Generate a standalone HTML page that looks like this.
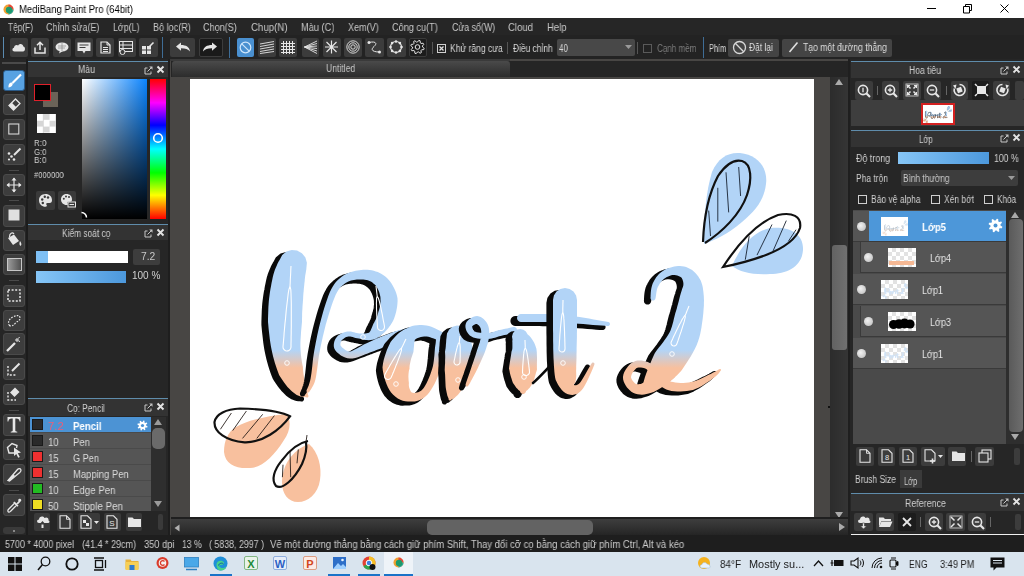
<!DOCTYPE html>
<html><head><meta charset="utf-8"><style>
html,body{margin:0;padding:0;width:1024px;height:576px;overflow:hidden;background:#262626;position:relative}
.t{position:absolute;white-space:pre;font-family:"Liberation Sans",sans-serif;line-height:1;will-change:transform}
svg{overflow:visible}
</style></head><body>
<div style="position:absolute;left:0px;top:0px;width:1024px;height:18px;background:#ffffff"></div><svg style="position:absolute;left:3px;top:4px" width="11" height="11" viewBox="0 0 11 11">
<circle cx="5.5" cy="5.5" r="5" fill="#f0a030"/><path d="M5.5 0.5 A5 5 0 0 1 10.5 5.5 L5.5 5.5Z" fill="#e8453c"/>
<path d="M10.5 5.5 A5 5 0 0 1 5.5 10.5 L5.5 5.5Z" fill="#2aa8a0"/><circle cx="6" cy="6" r="3.2" fill="#1e9a6a"/></svg><div style="position:absolute;left:927px;top:8px;width:9px;height:1px;background:#000"></div><svg style="position:absolute;left:962px;top:3px" width="11" height="11"><path d="M1.5 3.5h6v6.5h-6z M3.5 3.5v-2h6v6h-2" fill="none" stroke="#000" stroke-width="1"/></svg><svg style="position:absolute;left:999.5px;top:3.7px" width="9" height="9"><path d="M0.5 0.5L8.5 8.5M8.5 0.5L0.5 8.5" stroke="#000" stroke-width="1"/></svg><div style="position:absolute;left:0px;top:18px;width:1024px;height:17px;background:#262626"></div><div style="position:absolute;left:0px;top:35px;width:1024px;height:24px;background:#232323"></div><div style="position:absolute;left:2.5px;top:37px;width:1px;height:21px;background:#5a8ab0"></div><div style="position:absolute;left:9.7px;top:38px;width:18.1px;height:18.5px;background:#3c3c3c;border-radius:2px;"></div><div style="position:absolute;left:31.3px;top:38px;width:17.900000000000002px;height:18.5px;background:#3c3c3c;border-radius:2px;"></div><div style="position:absolute;left:53.3px;top:38px;width:17.900000000000006px;height:18.5px;background:#3c3c3c;border-radius:2px;"></div><div style="position:absolute;left:74.7px;top:38px;width:18.5px;height:18.5px;background:#3c3c3c;border-radius:2px;"></div><div style="position:absolute;left:96.1px;top:38px;width:18.200000000000003px;height:18.5px;background:#3c3c3c;border-radius:2px;"></div><div style="position:absolute;left:118px;top:38px;width:18.19999999999999px;height:18.5px;background:#3c3c3c;border-radius:2px;"></div><div style="position:absolute;left:139.2px;top:38px;width:19.0px;height:18.5px;background:#3c3c3c;border-radius:2px;"></div><div style="position:absolute;left:162px;top:37px;width:1px;height:21px;background:#3f6d96"></div><div style="position:absolute;left:170px;top:38px;width:24.80000000000001px;height:18.5px;background:#3c3c3c;border-radius:2px;"></div><div style="position:absolute;left:198.6px;top:38px;width:24.099999999999994px;height:18.5px;background:#1a1a1a;border-radius:2px;border:1px solid #3c3c3c;box-sizing:border-box"></div><div style="position:absolute;left:229px;top:37px;width:1px;height:21px;background:#3f6d96"></div><div style="position:absolute;left:236.7px;top:38px;width:17.600000000000023px;height:18.5px;background:#4a90d0;border-radius:2px;"></div><div style="position:absolute;left:257.8px;top:38px;width:18.19999999999999px;height:18.5px;background:#3c3c3c;border-radius:2px;"></div><div style="position:absolute;left:279px;top:38px;width:18.399999999999977px;height:18.5px;background:#3c3c3c;border-radius:2px;"></div><div style="position:absolute;left:301.5px;top:38px;width:17.5px;height:18.5px;background:#3c3c3c;border-radius:2px;"></div><div style="position:absolute;left:322.9px;top:38px;width:18.100000000000023px;height:18.5px;background:#3c3c3c;border-radius:2px;"></div><div style="position:absolute;left:344px;top:38px;width:18px;height:18.5px;background:#3c3c3c;border-radius:2px;"></div><div style="position:absolute;left:365px;top:38px;width:18.5px;height:18.5px;background:#3c3c3c;border-radius:2px;"></div><div style="position:absolute;left:387px;top:38px;width:18.5px;height:18.5px;background:#3c3c3c;border-radius:2px;"></div><div style="position:absolute;left:409px;top:38px;width:17.600000000000023px;height:18.5px;background:#1c1c1c;border-radius:2px;border:1px solid #3a3a3a;box-sizing:border-box"></div><div style="position:absolute;left:432px;top:42px;width:1px;height:12px;background:#555"></div><div style="position:absolute;left:437px;top:44px;width:9px;height:9px;border:1px solid #d0d0d0;box-sizing:border-box"></div><svg style="position:absolute;left:437px;top:44px" width="9" height="9"><path d="M2.5 2.5L6.5 6.5M6.5 2.5L2.5 6.5" stroke="#e0e0e0" stroke-width="1.3"/></svg><div style="position:absolute;left:507px;top:42px;width:1px;height:12px;background:#555"></div><div style="position:absolute;left:557px;top:38.5px;width:78px;height:17px;background:#484848;border-radius:2px"></div><svg style="position:absolute;left:625px;top:45px" width="7" height="4"><path d="M0 0h7L3.5 4z" fill="#9a9a9a"/></svg><div style="position:absolute;left:637px;top:42px;width:1px;height:12px;background:#555"></div><div style="position:absolute;left:643px;top:44px;width:8.5px;height:9px;border:1px solid #5a5a5a;box-sizing:border-box"></div><div style="position:absolute;left:703px;top:37px;width:1px;height:21px;background:#3f6d96"></div><div style="position:absolute;left:728.4px;top:38.6px;width:50.60000000000002px;height:18.299999999999997px;background:#444444;border-radius:2px;"></div><svg style="position:absolute;left:732px;top:40px" width="15" height="15"><circle cx="7.5" cy="7.5" r="6" fill="none" stroke="#d8d8d8" stroke-width="1.3"/><path d="M3.3 3.3L11.7 11.7" stroke="#d8d8d8" stroke-width="1.3"/></svg><div style="position:absolute;left:782.2px;top:38.6px;width:109.69999999999993px;height:18.299999999999997px;background:#444444;border-radius:2px;"></div><svg style="position:absolute;left:788px;top:41px" width="11" height="12"><path d="M1.5 11L9.5 1.5" stroke="#e0e0e0" stroke-width="1.6"/></svg><div style="position:absolute;left:0px;top:59px;width:28px;height:477px;background:#262626"></div><div style="position:absolute;left:3px;top:70px;width:22px;height:21px;background:#58a2e2;border-radius:3px;border:1px solid #2a5a88;box-sizing:border-box"></div><div style="position:absolute;left:3px;top:94px;width:22px;height:21.400000000000006px;background:#3d3d3d;border-radius:3px;border:1px solid #4a4a4a;box-sizing:border-box"></div><div style="position:absolute;left:3px;top:119px;width:22px;height:21px;background:#3d3d3d;border-radius:3px;border:1px solid #4a4a4a;box-sizing:border-box"></div><div style="position:absolute;left:3px;top:144px;width:22px;height:21px;background:#3d3d3d;border-radius:3px;border:1px solid #4a4a4a;box-sizing:border-box"></div><div style="position:absolute;left:3px;top:174px;width:22px;height:22px;background:#3d3d3d;border-radius:3px;border:1px solid #4a4a4a;box-sizing:border-box"></div><div style="position:absolute;left:3px;top:205px;width:22px;height:21.80000000000001px;background:#3d3d3d;border-radius:3px;border:1px solid #4a4a4a;box-sizing:border-box"></div><div style="position:absolute;left:3px;top:229.7px;width:22px;height:21.30000000000001px;background:#3d3d3d;border-radius:3px;border:1px solid #4a4a4a;box-sizing:border-box"></div><div style="position:absolute;left:3px;top:254px;width:22px;height:21.399999999999977px;background:#3d3d3d;border-radius:3px;border:1px solid #4a4a4a;box-sizing:border-box"></div><div style="position:absolute;left:3px;top:284.7px;width:22px;height:21.900000000000034px;background:#3d3d3d;border-radius:3px;border:1px solid #4a4a4a;box-sizing:border-box"></div><div style="position:absolute;left:3px;top:309.5px;width:22px;height:21.899999999999977px;background:#3d3d3d;border-radius:3px;border:1px solid #4a4a4a;box-sizing:border-box"></div><div style="position:absolute;left:3px;top:333px;width:22px;height:21.80000000000001px;background:#3d3d3d;border-radius:3px;border:1px solid #4a4a4a;box-sizing:border-box"></div><div style="position:absolute;left:3px;top:358.4px;width:22px;height:21.600000000000023px;background:#3d3d3d;border-radius:3px;border:1px solid #4a4a4a;box-sizing:border-box"></div><div style="position:absolute;left:3px;top:384px;width:22px;height:20.69999999999999px;background:#3d3d3d;border-radius:3px;border:1px solid #4a4a4a;box-sizing:border-box"></div><div style="position:absolute;left:3px;top:413.8px;width:22px;height:21.899999999999977px;background:#3d3d3d;border-radius:3px;border:1px solid #4a4a4a;box-sizing:border-box"></div><div style="position:absolute;left:3px;top:438.6px;width:22px;height:21.899999999999977px;background:#3d3d3d;border-radius:3px;border:1px solid #4a4a4a;box-sizing:border-box"></div><div style="position:absolute;left:3px;top:464px;width:22px;height:21px;background:#3d3d3d;border-radius:3px;border:1px solid #4a4a4a;box-sizing:border-box"></div><div style="position:absolute;left:3px;top:494px;width:22px;height:22px;background:#3d3d3d;border-radius:3px;border:1px solid #4a4a4a;box-sizing:border-box"></div><div style="position:absolute;left:9px;top:170px;width:10px;height:1px;background:#4a4a4a"></div><div style="position:absolute;left:9px;top:200px;width:10px;height:1px;background:#4a4a4a"></div><div style="position:absolute;left:9px;top:279.8px;width:10px;height:1px;background:#4a4a4a"></div><div style="position:absolute;left:9px;top:409.5px;width:10px;height:1px;background:#4a4a4a"></div><div style="position:absolute;left:9px;top:489.7px;width:10px;height:1px;background:#4a4a4a"></div><div style="position:absolute;left:3px;top:527px;width:22px;height:7px;background:#3a3a3a;border-radius:3px"></div><div style="position:absolute;left:2px;top:62px;width:24px;height:1.5px;background:#4a4a4a"></div><div style="position:absolute;left:26px;top:59px;width:1.5px;height:477px;background:#1c1c1c"></div><div style="position:absolute;left:28px;top:59px;width:142px;height:477px;background:#262626"></div><div style="position:absolute;left:168px;top:59px;width:3px;height:477px;background:#1e1e1e"></div><div style="position:absolute;left:28px;top:61px;width:140px;height:1px;background:#5f8cab"></div><div style="position:absolute;left:28px;top:62px;width:140px;height:15px;background:#333333"></div><svg style="position:absolute;left:143px;top:64.5px" width="22" height="10"><path d="M4.5 3H2V9H8V6.5" fill="none" stroke="#c8c8c8" stroke-width="1"/><path d="M4.5 6.5L8 3" stroke="#c8c8c8" stroke-width="1"/><path d="M6.2 1.5H9.5V4.8Z" fill="#c8c8c8"/><path d="M14.5 1.5L20.5 7.5M20.5 1.5L14.5 7.5" stroke="#e4e4e4" stroke-width="1.9"/></svg><div style="position:absolute;left:42.6px;top:91.6px;width:15px;height:15px;background:#6b6358"></div><div style="position:absolute;left:33.7px;top:83.5px;width:17.7px;height:17.5px;background:#000;border:1.5px solid #e0202a;box-sizing:border-box"></div><div style="position:absolute;left:37px;top:114px;width:19px;height:19px;background:#fff;background-image:linear-gradient(45deg,transparent 0),conic-gradient(#d6d6d6 25%,#fff 0 50%,#d6d6d6 0 75%,#fff 0);background-size:12.6px 12.6px;background-position:0 0"></div><div style="position:absolute;left:36px;top:191px;width:18.7px;height:18.7px;background:#3a3a3a;border-radius:2px"></div><div style="position:absolute;left:58px;top:191px;width:18px;height:18.7px;background:#3a3a3a;border-radius:2px"></div><div style="position:absolute;left:82px;top:79px;width:65px;height:140px;background:linear-gradient(to bottom,rgba(0,0,0,0),#000),linear-gradient(to right,#fff,#0a84ff)"></div><div style="position:absolute;left:150px;top:79px;width:16px;height:140px;background:linear-gradient(to bottom,#ff0000 0%,#ff00ff 17%,#0000ff 33%,#00ffff 50%,#00ff00 67%,#ffff00 83%,#ff0000 100%)"></div><svg style="position:absolute;left:152px;top:132px" width="12" height="12"><circle cx="6" cy="6" r="4.3" fill="none" stroke="#fff" stroke-width="1.6"/></svg><svg style="position:absolute;left:80px;top:211px" width="9" height="9"><path d="M1.5 1.5A5 5 0 0 1 6.5 6.5" fill="none" stroke="#fff" stroke-width="1.5"/></svg><div style="position:absolute;left:28px;top:224px;width:140px;height:1px;background:#5f8cab"></div><div style="position:absolute;left:28px;top:225px;width:140px;height:15px;background:#333333"></div><svg style="position:absolute;left:143px;top:227.5px" width="22" height="10"><path d="M4.5 3H2V9H8V6.5" fill="none" stroke="#c8c8c8" stroke-width="1"/><path d="M4.5 6.5L8 3" stroke="#c8c8c8" stroke-width="1"/><path d="M6.2 1.5H9.5V4.8Z" fill="#c8c8c8"/><path d="M14.5 1.5L20.5 7.5M20.5 1.5L14.5 7.5" stroke="#e4e4e4" stroke-width="1.9"/></svg><div style="position:absolute;left:35.5px;top:250.8px;width:92px;height:12px;background:#ffffff"></div><div style="position:absolute;left:35.5px;top:250.8px;width:12.2px;height:12px;background:#7ec0f5"></div><div style="position:absolute;left:133.4px;top:248.6px;width:26.6px;height:16px;background:#3d3d3d;border-radius:2px"></div><div style="position:absolute;left:35.5px;top:270.5px;width:90.5px;height:12.5px;background:linear-gradient(to right,#86c6f7,#4c98dc)"></div><div style="position:absolute;left:28px;top:398px;width:140px;height:1px;background:#5f8cab"></div><div style="position:absolute;left:28px;top:399px;width:140px;height:17px;background:#333333"></div><svg style="position:absolute;left:143px;top:401.5px" width="22" height="10"><path d="M4.5 3H2V9H8V6.5" fill="none" stroke="#c8c8c8" stroke-width="1"/><path d="M4.5 6.5L8 3" stroke="#c8c8c8" stroke-width="1"/><path d="M6.2 1.5H9.5V4.8Z" fill="#c8c8c8"/><path d="M14.5 1.5L20.5 7.5M20.5 1.5L14.5 7.5" stroke="#e4e4e4" stroke-width="1.9"/></svg><div style="position:absolute;left:30px;top:417px;width:121px;height:94px;overflow:hidden;background:#4a4a4a"><div style="position:absolute;left:0;top:0px;width:121px;height:15px;background:#4c93d4"></div><div style="position:absolute;left:2px;top:2px;width:11px;height:11px;background:#2a2a2a;border:1px solid #1a1a1a;box-sizing:border-box"></div><div style="position:absolute;left:0;top:16px;width:121px;height:15px;background:#555555"></div><div style="position:absolute;left:2px;top:18px;width:11px;height:11px;background:#2a2a2a;border:1px solid #1a1a1a;box-sizing:border-box"></div><div style="position:absolute;left:0;top:32px;width:121px;height:15px;background:#555555"></div><div style="position:absolute;left:2px;top:34px;width:11px;height:11px;background:#ee3030;border:1px solid #1a1a1a;box-sizing:border-box"></div><div style="position:absolute;left:0;top:48px;width:121px;height:15px;background:#555555"></div><div style="position:absolute;left:2px;top:50px;width:11px;height:11px;background:#ee3030;border:1px solid #1a1a1a;box-sizing:border-box"></div><div style="position:absolute;left:0;top:64px;width:121px;height:15px;background:#555555"></div><div style="position:absolute;left:2px;top:66px;width:11px;height:11px;background:#22bb22;border:1px solid #1a1a1a;box-sizing:border-box"></div><div style="position:absolute;left:0;top:80px;width:121px;height:15px;background:#555555"></div><div style="position:absolute;left:2px;top:82px;width:11px;height:11px;background:#eedd22;border:1px solid #1a1a1a;box-sizing:border-box"></div></div><div style="position:absolute;left:151px;top:417px;width:15px;height:94px;background:#2e2e2e"></div><svg style="position:absolute;left:153px;top:418px" width="10" height="90"><path d="M5 1L9 7H1z" fill="#9a9a9a"/><path d="M5 89L9 83H1z" fill="#9a9a9a"/></svg><div style="position:absolute;left:152px;top:428px;width:13px;height:21px;background:#6a6a6a;border-radius:5px"></div><div style="position:absolute;left:34px;top:513px;width:16px;height:18px;background:#3a3a3a;border-radius:2px"></div><div style="position:absolute;left:57px;top:513px;width:16px;height:18px;background:#3a3a3a;border-radius:2px"></div><div style="position:absolute;left:78px;top:513px;width:22px;height:18px;background:#3a3a3a;border-radius:2px"></div><div style="position:absolute;left:104px;top:513px;width:17px;height:18px;background:#3a3a3a;border-radius:2px"></div><div style="position:absolute;left:126px;top:513px;width:16px;height:18px;background:#3a3a3a;border-radius:2px"></div><div style="position:absolute;left:158px;top:514px;width:5px;height:16px;background:#3a3a3a;border-radius:2px"></div><div style="position:absolute;left:170px;top:59px;width:680px;height:477px;background:#484644"></div><div style="position:absolute;left:170px;top:59px;width:340px;height:2px;background:#3a3a3a"></div><div style="position:absolute;left:171px;top:61px;width:679px;height:16px;background:#252525"></div><div style="position:absolute;left:171.5px;top:61px;width:338px;height:15.5px;background:linear-gradient(#4a4a4a,#2c2c2c);border-radius:3px 3px 0 0"></div><div style="position:absolute;left:190px;top:79px;width:624px;height:438px;background:#ffffff"></div><div style="position:absolute;left:830px;top:77px;width:18px;height:442px;background:linear-gradient(to right,#2c2c2c,#353535)"></div><div style="position:absolute;left:832px;top:245px;width:14.5px;height:105px;background:linear-gradient(to right,#626262,#707070);border-radius:3px"></div><svg style="position:absolute;left:834px;top:78px" width="10" height="8"><path d="M5 1L9 7H1z" fill="#aaaaaa"/></svg><svg style="position:absolute;left:834px;top:511px" width="10" height="8"><path d="M5 7L9 1H1z" fill="#aaaaaa"/></svg><div style="position:absolute;left:171px;top:517px;width:677px;height:1.5px;background:#1f1f1f"></div><div style="position:absolute;left:171px;top:518.5px;width:677px;height:16.5px;background:linear-gradient(#3e3e3e,#252525)"></div><div style="position:absolute;left:427px;top:520px;width:166px;height:14.5px;background:#636363;border-radius:5px"></div><svg style="position:absolute;left:173px;top:523px" width="8" height="10"><path d="M1.5 5L6.5 1.5V8.5z" fill="#b0b0b0"/></svg><svg style="position:absolute;left:838px;top:522px" width="8" height="10"><path d="M7 5L1 1V9z" fill="#aaaaaa"/></svg><div style="position:absolute;left:848px;top:59px;width:2px;height:477px;background:#1f1f1f"></div><div style="position:absolute;left:828px;top:406px;width:1.5px;height:1.5px;background:#111"></div><div style="position:absolute;left:850px;top:59px;width:174px;height:477px;background:#262626"></div><div style="position:absolute;left:851px;top:61px;width:173px;height:1px;background:#5f8cab"></div><div style="position:absolute;left:851px;top:62px;width:173px;height:16px;background:#333333"></div><svg style="position:absolute;left:999px;top:64.5px" width="22" height="10"><path d="M4.5 3H2V9H8V6.5" fill="none" stroke="#c8c8c8" stroke-width="1"/><path d="M4.5 6.5L8 3" stroke="#c8c8c8" stroke-width="1"/><path d="M6.2 1.5H9.5V4.8Z" fill="#c8c8c8"/><path d="M14.5 1.5L20.5 7.5M20.5 1.5L14.5 7.5" stroke="#e4e4e4" stroke-width="1.9"/></svg><div style="position:absolute;left:851px;top:78px;width:173px;height:22px;background:#262626"></div><div style="position:absolute;left:854.5px;top:80.5px;width:18.299999999999955px;height:19.5px;background:#3c3c3c;border-radius:2px"></div><div style="position:absolute;left:881.7px;top:80.5px;width:17.199999999999932px;height:19.5px;background:#3c3c3c;border-radius:2px"></div><div style="position:absolute;left:902.5px;top:80.5px;width:18.100000000000023px;height:19.5px;background:#3c3c3c;border-radius:2px"></div><div style="position:absolute;left:924px;top:80.5px;width:17px;height:19.5px;background:#3c3c3c;border-radius:2px"></div><div style="position:absolute;left:950.6px;top:80.5px;width:17.199999999999932px;height:19.5px;background:#3c3c3c;border-radius:2px"></div><div style="position:absolute;left:972px;top:80.5px;width:17px;height:19.5px;background:#1c1c1c;border-radius:2px"></div><div style="position:absolute;left:992.9px;top:80.5px;width:17.100000000000023px;height:19.5px;background:#3c3c3c;border-radius:2px"></div><div style="position:absolute;left:1015px;top:80.5px;width:9px;height:19.5px;background:#3c3c3c;border-radius:2px"></div><div style="position:absolute;left:851px;top:100px;width:173px;height:26px;background:#3e3e3e"></div><div style="position:absolute;left:920.6px;top:103px;width:34px;height:22px;background:#fff;border:2px solid #d42020;box-sizing:border-box"></div><svg style="position:absolute;left:0;top:0;overflow:hidden" width="1024" height="576"><defs><filter id="bluef"><feColorMatrix type="matrix" values="0 0 0 0 0.62  0 0 0 0 0.76  0 0 0 0 0.93  0 0 0 1 0"/></filter><clipPath id="thc"><rect x="922.6" y="105" width="30" height="18"/></clipPath></defs><g clip-path="url(#thc)"><use href="#art" transform="translate(911.9,98.3) scale(0.05)"/></g></svg><div style="position:absolute;left:851px;top:129.6px;width:173px;height:1px;background:#5f8cab"></div><div style="position:absolute;left:851px;top:130.6px;width:173px;height:16px;background:#333333"></div><svg style="position:absolute;left:999px;top:133.1px" width="22" height="10"><path d="M4.5 3H2V9H8V6.5" fill="none" stroke="#c8c8c8" stroke-width="1"/><path d="M4.5 6.5L8 3" stroke="#c8c8c8" stroke-width="1"/><path d="M6.2 1.5H9.5V4.8Z" fill="#c8c8c8"/><path d="M14.5 1.5L20.5 7.5M20.5 1.5L14.5 7.5" stroke="#e4e4e4" stroke-width="1.9"/></svg><div style="position:absolute;left:897.5px;top:151.9px;width:91.2px;height:11.9px;background:linear-gradient(to right,#86c6f7,#4c98dc)"></div><div style="position:absolute;left:901px;top:170px;width:117.4px;height:16px;background:#3d3d3d;border-radius:2px"></div><svg style="position:absolute;left:1008px;top:176px" width="7" height="4"><path d="M0 0h7L3.5 4z" fill="#9a9a9a"/></svg><div style="position:absolute;left:858px;top:195px;width:9px;height:9px;border:1px solid #cfcfcf;box-sizing:border-box"></div><div style="position:absolute;left:931px;top:195px;width:9px;height:9px;border:1px solid #cfcfcf;box-sizing:border-box"></div><div style="position:absolute;left:984px;top:195px;width:9px;height:9px;border:1px solid #cfcfcf;box-sizing:border-box"></div><div style="position:absolute;left:853px;top:210px;width:155px;height:234px;background:#4a4a4a"></div><div style="position:absolute;left:853px;top:211px;width:153px;height:31px;background:#555555;border-bottom:1px solid #3a3a3a;box-sizing:border-box"></div><div style="position:absolute;left:868.75px;top:211px;width:137.25px;height:30px;background:#4d97d9"></div><div style="position:absolute;left:856.5px;top:221.5px;width:9px;height:9px;border-radius:50%;background:radial-gradient(circle at 40% 40%,#f2f2f2,#b8b8b8)"></div><div style="position:absolute;left:880.6px;top:216.5px;width:27.7px;height:19.4px;background:#fff"></div><svg style="position:absolute;left:880.6px;top:216.5px;overflow:hidden" width="27.7" height="19.4" viewBox="190 79 624 438" preserveAspectRatio="none"><use href="#art" opacity="0.4"/></svg><div style="position:absolute;left:853px;top:242px;width:153px;height:31px;background:#555555;border-bottom:1px solid #3a3a3a;box-sizing:border-box"></div><div style="position:absolute;left:853px;top:242px;width:8px;height:31px;background:#4a4a4a"></div><div style="position:absolute;left:860px;top:242px;width:1px;height:31px;background:#3a3a3a"></div><div style="position:absolute;left:864.25px;top:252.5px;width:9px;height:9px;border-radius:50%;background:radial-gradient(circle at 40% 40%,#f2f2f2,#b8b8b8)"></div><div style="position:absolute;left:888px;top:247.5px;width:27.7px;height:19.4px;background:#fff;background-image:conic-gradient(#e2e2e2 25%,#fff 0 50%,#e2e2e2 0 75%,#fff 0);background-size:8px 8px"></div><div style="position:absolute;left:889px;top:261px;width:25px;height:4px;background:#f5b894"></div><div style="position:absolute;left:853px;top:274px;width:153px;height:31px;background:#555555;border-bottom:1px solid #3a3a3a;box-sizing:border-box"></div><div style="position:absolute;left:856.5px;top:284.5px;width:9px;height:9px;border-radius:50%;background:radial-gradient(circle at 40% 40%,#f2f2f2,#b8b8b8)"></div><div style="position:absolute;left:880.6px;top:279.5px;width:27.7px;height:19.4px;background:#fff;background-image:conic-gradient(#e2e2e2 25%,#fff 0 50%,#e2e2e2 0 75%,#fff 0);background-size:8px 8px"></div><svg style="position:absolute;left:880.6px;top:279.5px;overflow:hidden" width="27.7" height="19.4" viewBox="190 79 624 438" preserveAspectRatio="none"><g opacity="0.9"><use href="#art" style="filter:url(#bluef)"/></g></svg><div style="position:absolute;left:853px;top:306px;width:153px;height:31px;background:#555555;border-bottom:1px solid #3a3a3a;box-sizing:border-box"></div><div style="position:absolute;left:853px;top:306px;width:8px;height:31px;background:#4a4a4a"></div><div style="position:absolute;left:860px;top:306px;width:1px;height:31px;background:#3a3a3a"></div><div style="position:absolute;left:864.25px;top:316.5px;width:9px;height:9px;border-radius:50%;background:radial-gradient(circle at 40% 40%,#f2f2f2,#b8b8b8)"></div><div style="position:absolute;left:888px;top:311.5px;width:27.7px;height:19.4px;background:#fff;background-image:conic-gradient(#e2e2e2 25%,#fff 0 50%,#e2e2e2 0 75%,#fff 0);background-size:8px 8px"></div><svg style="position:absolute;left:888px;top:311.5px" width="28" height="20"><circle cx="5.5" cy="12.5" r="4.5"/><circle cx="11" cy="12" r="4.8"/><circle cx="16.5" cy="11.5" r="5"/><circle cx="22" cy="12" r="4.6"/></svg><div style="position:absolute;left:853px;top:338px;width:153px;height:31px;background:#555555;border-bottom:1px solid #3a3a3a;box-sizing:border-box"></div><div style="position:absolute;left:856.5px;top:348.5px;width:9px;height:9px;border-radius:50%;background:radial-gradient(circle at 40% 40%,#f2f2f2,#b8b8b8)"></div><div style="position:absolute;left:880.6px;top:343.5px;width:27.7px;height:19.4px;background:#fff;background-image:conic-gradient(#e2e2e2 25%,#fff 0 50%,#e2e2e2 0 75%,#fff 0);background-size:8px 8px"></div><svg style="position:absolute;left:880.6px;top:343.5px;overflow:hidden" width="27.7" height="19.4" viewBox="190 79 624 438" preserveAspectRatio="none"><g opacity="0.9"><use href="#art" style="filter:url(#bluef)"/></g></svg><div style="position:absolute;left:1006px;top:210px;width:18px;height:234px;background:#2e2e2e"></div><svg style="position:absolute;left:1010px;top:211px" width="10" height="8"><path d="M5 1L9 7H1z" fill="#aaaaaa"/></svg><svg style="position:absolute;left:1010px;top:433px" width="10" height="8"><path d="M5 7L9 1H1z" fill="#aaaaaa"/></svg><div style="position:absolute;left:1008.5px;top:219px;width:14px;height:213px;background:linear-gradient(to right,#5a5a5a,#6e6e6e);border-radius:4px"></div><div style="position:absolute;left:851px;top:444px;width:173px;height:25px;background:#262626"></div><div style="position:absolute;left:856px;top:447.4px;width:18px;height:18.6px;background:#3c3c3c;border-radius:2px"></div><div style="position:absolute;left:877.6px;top:447.4px;width:17.399999999999977px;height:18.6px;background:#3c3c3c;border-radius:2px"></div><div style="position:absolute;left:899px;top:447.4px;width:18.399999999999977px;height:18.6px;background:#3c3c3c;border-radius:2px"></div><div style="position:absolute;left:921px;top:447.4px;width:23.600000000000023px;height:18.6px;background:#3c3c3c;border-radius:2px"></div><div style="position:absolute;left:948.4px;top:447.4px;width:17.600000000000023px;height:18.6px;background:#3c3c3c;border-radius:2px"></div><div style="position:absolute;left:975px;top:447.4px;width:18.600000000000023px;height:18.6px;background:#3c3c3c;border-radius:2px"></div><div style="position:absolute;left:1014px;top:448px;width:6px;height:17px;background:#3c3c3c;border-radius:2px"></div><div style="position:absolute;left:851px;top:469px;width:173px;height:20px;background:#262626"></div><div style="position:absolute;left:899.7px;top:470.4px;width:22.2px;height:17.6px;background:#3a3a3a"></div><div style="position:absolute;left:851px;top:493.4px;width:173px;height:1px;background:#5f8cab"></div><div style="position:absolute;left:851px;top:494.4px;width:173px;height:16.6px;background:#333333"></div><svg style="position:absolute;left:999px;top:496.9px" width="22" height="10"><path d="M4.5 3H2V9H8V6.5" fill="none" stroke="#c8c8c8" stroke-width="1"/><path d="M4.5 6.5L8 3" stroke="#c8c8c8" stroke-width="1"/><path d="M6.2 1.5H9.5V4.8Z" fill="#c8c8c8"/><path d="M14.5 1.5L20.5 7.5M20.5 1.5L14.5 7.5" stroke="#e4e4e4" stroke-width="1.9"/></svg><div style="position:absolute;left:854px;top:513px;width:19px;height:18px;background:#3c3c3c;border-radius:2px"></div><div style="position:absolute;left:876px;top:513px;width:18px;height:18px;background:#3c3c3c;border-radius:2px"></div><div style="position:absolute;left:898px;top:513px;width:18px;height:18px;background:#1c1c1c;border-radius:2px"></div><div style="position:absolute;left:925px;top:513px;width:18px;height:18px;background:#3c3c3c;border-radius:2px"></div><div style="position:absolute;left:946px;top:513px;width:19px;height:18px;background:#3c3c3c;border-radius:2px"></div><div style="position:absolute;left:968px;top:513px;width:18px;height:18px;background:#3c3c3c;border-radius:2px"></div><div style="position:absolute;left:1015px;top:514px;width:6px;height:16px;background:#3c3c3c;border-radius:2px"></div><div style="position:absolute;left:851px;top:534px;width:173px;height:2px;background:#f0f0f0"></div><div style="position:absolute;left:0px;top:535px;width:1024px;height:17px;background:#1e1e1e"></div><div style="position:absolute;left:0px;top:552px;width:1024px;height:24px;background:#d9e4ee"></div><div style="position:absolute;left:384px;top:552px;width:28.7px;height:24px;background:#eef3f8"></div>
<svg style="position:absolute;left:0;top:0" width="1024" height="576" viewBox="0 0 1024 576">
<defs><linearGradient id="gr" gradientUnits="userSpaceOnUse" x1="0" y1="350" x2="0" y2="368"><stop offset="0" stop-color="#b2d4f7"/><stop offset="1" stop-color="#f8c09e"/></linearGradient><clipPath id="cv"><rect x="189" y="79" width="625" height="438"/></clipPath></defs>
<g clip-path="url(#cv)"><g id="art">
<path d="M704 244 C704 215 706 192 712 172 C718 158 728 152 740 153 C758 155 768 168 766 184 C764 200 756 210 742 222 C728 234 715 240 704 244Z" fill="#b2d4f7"/>
<path d="M732 266 C740 248 752 232 770 228 C790 226 804 234 803 250 C802 266 788 274 770 274 C752 275 740 272 732 266Z" fill="#b2d4f7"/>
<path d="M703 242 C704 215 708 195 718 176 C726 164 734 159 742 161 C752 164 752 180 747 195 C740 215 722 232 705 243" fill="none" stroke="#111" stroke-width="2.2"/>
<path d="M723 267 C738 244 758 222 778 215 C792 212 802 216 800 228 C796 240 784 248 766 255 C750 261 738 264 723 267Z" fill="none" stroke="#111" stroke-width="2.2"/>
<path d="M738.7 167 L740.6 196" stroke="#0e1826" stroke-width="0.85"/>
<path d="M726 172.3 L728.7 212.4" stroke="#0e1826" stroke-width="0.85"/>
<path d="M717.8 187.8 L717.8 221.6" stroke="#0e1826" stroke-width="0.85"/>
<path d="M708.7 210.6 L710.5 236" stroke="#0e1826" stroke-width="0.85"/>
<path d="M749.2 236.2 L745.3 259.7" stroke="#0e1826" stroke-width="0.85"/>
<path d="M772 224.5 L757 255.1" stroke="#0e1826" stroke-width="0.85"/>
<path d="M786.3 220.6 L772.7 251.8" stroke="#0e1826" stroke-width="0.85"/>
<path d="M796 229.7 L788.3 241.4" stroke="#0e1826" stroke-width="0.85"/>
<path d="M224 452 C224 440 228 432 236 427 C248 420 268 416 286 414 C292 420 290 432 284 440 C274 456 262 468 250 468 C236 469 225 464 224 452Z" fill="#f8c09e"/>
<path d="M282 482 C282 466 292 450 309 444 C318 452 322 466 320 480 C318 494 308 502 298 502 C288 502 282 494 282 482Z" fill="#f8c09e"/>
<path d="M290 416.3 C282 412 262 409 240 408.5 C226 409 216 414 214.5 422 C214 432 226 441 244.5 442.3 C262 443 280 430 290 416.3Z" fill="none" stroke="#111" stroke-width="2.2"/>
<path d="M308 441 C298 443 288 452 281.7 460.6 C274 470 271 480 276 486 C282 490 294 480 302 464 C306 455 307 448 306 442" fill="none" stroke="#111" stroke-width="2.2"/>
<path d="M231.4 413 L220.4 429.3" stroke="#1e1410" stroke-width="0.85"/>
<path d="M246.4 411 L232.7 430.6" stroke="#1e1410" stroke-width="0.85"/>
<path d="M262.7 414.3 L242.5 438.4" stroke="#1e1410" stroke-width="0.85"/>
<path d="M274.4 415.6 L256.8 438.4" stroke="#1e1410" stroke-width="0.85"/>
<path d="M290 450.8 L290.7 477.2" stroke="#1e1410" stroke-width="0.85"/>
<path d="M298.3 449.4 L297 463.3" stroke="#1e1410" stroke-width="0.85"/>
<path d="M283 464.7 L282.4 477.2" stroke="#1e1410" stroke-width="0.85"/>
<path d="M306 442 L307 435" stroke="#1e1410" stroke-width="0.85"/>
<path d="M279.6 259.9 L279.1 260.7 L278.5 261.8 L277.7 263.3 L276.9 265.2 L276.0 267.3 L275.0 269.6 L274.1 272.2 L273.3 274.9 L272.7 277.6 L272.1 280.4 L271.5 283.3 L271.0 286.3 L270.4 289.3 L269.9 292.4 L269.5 295.5 L269.1 298.4 L268.8 301.4 L268.6 304.2 L268.4 307.1 L268.3 310.0 L268.2 312.9 L268.1 315.8 L268.0 318.9 L268.0 322.0 L268.3 325.1 L268.6 328.4 L269.0 331.9 L269.4 335.4 L269.8 339.0 L270.3 342.6 L270.9 346.2 L271.6 349.7 L272.3 353.1 L273.1 356.5 L274.0 359.7 L274.9 363.0 L275.9 366.1 L276.9 369.1 L278.0 372.0 L279.1 374.9 L280.7 377.6 L282.4 380.1 L284.1 382.5 L285.8 384.8 L287.5 386.9 L289.3 388.8 L291.0 390.5 L292.7 392.1 L294.7 393.6 L296.7 394.9 L298.7 395.8 L300.5 396.4 L302.2 396.9 L303.7 397.1 L304.9 397.2 L306.0 397.1 L306.5 397.4 L307.1 397.5 L307.6 397.4 L308.1 397.0 L308.4 396.5 L308.5 395.9 L308.4 395.4 L308.0 394.9 L307.8 393.7 L307.5 392.4 L307.0 391.1 L306.5 389.7 L306.0 388.2 L305.6 386.8 L305.4 385.3 L305.3 383.9 L305.0 382.2 L304.6 380.3 L304.2 378.2 L303.8 376.1 L303.5 373.9 L303.2 371.6 L303.0 369.4 L302.9 367.1 L302.4 364.8 L302.0 362.4 L301.6 359.8 L301.2 357.2 L300.9 354.5 L300.7 351.7 L300.5 349.0 L300.4 346.3 L300.4 343.5 L300.5 340.6 L300.7 337.6 L300.9 334.5 L301.1 331.3 L301.4 328.2 L301.7 325.0 L302.0 322.0 L302.0 319.2 L302.1 316.6 L302.1 314.0 L302.2 311.5 L302.4 309.1 L302.5 306.6 L302.7 304.1 L302.9 301.6 L303.1 298.9 L303.2 296.2 L303.4 293.5 L303.7 290.7 L303.9 288.1 L304.2 285.5 L304.4 283.2 L304.7 281.1 L304.8 279.3 L305.0 277.6 L305.2 275.8 L305.5 274.1 L305.8 272.4 L306.0 270.9 L306.3 269.4 L306.4 268.1 L306.9 262.7 L305.4 257.4 L301.9 253.2 L297.1 250.6 L291.7 250.1 L286.4 251.6 L282.2 255.1Z" fill="#0a0a0a" stroke="#0a0a0a" stroke-width="2.2" stroke-linejoin="round" transform="translate(-5.5,3)"/>
<path d="M279.6 259.9 L279.1 260.7 L278.5 261.8 L277.7 263.3 L276.9 265.2 L276.0 267.3 L275.0 269.6 L274.1 272.2 L273.3 274.9 L272.7 277.6 L272.1 280.4 L271.5 283.3 L271.0 286.3 L270.4 289.3 L269.9 292.4 L269.5 295.5 L269.1 298.4 L268.8 301.4 L268.6 304.2 L268.4 307.1 L268.3 310.0 L268.2 312.9 L268.1 315.8 L268.0 318.9 L268.0 322.0 L268.3 325.1 L268.6 328.4 L269.0 331.9 L269.4 335.4 L269.8 339.0 L270.3 342.6 L270.9 346.2 L271.6 349.7 L272.3 353.1 L273.1 356.5 L274.0 359.7 L274.9 363.0 L275.9 366.1 L276.9 369.1 L278.0 372.0 L279.1 374.9 L280.7 377.6 L282.4 380.1 L284.1 382.5 L285.8 384.8 L287.5 386.9 L289.3 388.8 L291.0 390.5 L292.7 392.1 L294.7 393.6 L296.7 394.9 L298.7 395.8 L300.5 396.4 L302.2 396.9 L303.7 397.1 L304.9 397.2 L306.0 397.1 L306.5 397.4 L307.1 397.5 L307.6 397.4 L308.1 397.0 L308.4 396.5 L308.5 395.9 L308.4 395.4 L308.0 394.9 L307.8 393.7 L307.5 392.4 L307.0 391.1 L306.5 389.7 L306.0 388.2 L305.6 386.8 L305.4 385.3 L305.3 383.9 L305.0 382.2 L304.6 380.3 L304.2 378.2 L303.8 376.1 L303.5 373.9 L303.2 371.6 L303.0 369.4 L302.9 367.1 L302.4 364.8 L302.0 362.4 L301.6 359.8 L301.2 357.2 L300.9 354.5 L300.7 351.7 L300.5 349.0 L300.4 346.3 L300.4 343.5 L300.5 340.6 L300.7 337.6 L300.9 334.5 L301.1 331.3 L301.4 328.2 L301.7 325.0 L302.0 322.0 L302.0 319.2 L302.1 316.6 L302.1 314.0 L302.2 311.5 L302.4 309.1 L302.5 306.6 L302.7 304.1 L302.9 301.6 L303.1 298.9 L303.2 296.2 L303.4 293.5 L303.7 290.7 L303.9 288.1 L304.2 285.5 L304.4 283.2 L304.7 281.1 L304.8 279.3 L305.0 277.6 L305.2 275.8 L305.5 274.1 L305.8 272.4 L306.0 270.9 L306.3 269.4 L306.4 268.1 L306.9 262.7 L305.4 257.4 L301.9 253.2 L297.1 250.6 L291.7 250.1 L286.4 251.6 L282.2 255.1Z" fill="url(#gr)"/>
<path d="M309.4 391.7 L309.8 390.9 L310.5 390.1 L311.2 389.0 L312.0 387.6 L312.9 386.0 L313.8 384.2 L314.7 382.0 L315.4 379.5 L316.0 376.7 L316.5 373.6 L317.0 370.1 L317.5 366.5 L318.0 362.7 L318.5 358.9 L319.0 355.2 L319.7 351.5 L320.4 347.8 L321.2 344.0 L322.1 340.1 L322.9 336.2 L323.9 332.3 L324.8 328.4 L325.8 324.6 L326.9 320.8 L328.0 317.0 L329.2 313.1 L330.4 309.2 L331.7 305.3 L333.0 301.6 L334.3 298.2 L335.6 295.1 L336.9 292.5 L338.2 290.3 L339.4 288.6 L340.6 287.1 L341.8 285.9 L343.0 284.9 L344.3 283.9 L345.6 283.0 L347.0 282.2 L348.4 281.5 L349.7 280.9 L351.0 280.5 L352.4 280.2 L353.9 279.9 L355.4 279.7 L356.9 279.6 L358.5 279.5 L360.1 279.4 L361.7 279.5 L363.3 279.6 L364.9 279.7 L366.4 280.0 L367.8 280.3 L369.0 280.7 L370.2 281.2 L371.3 281.8 L372.4 282.6 L373.4 283.4 L374.4 284.2 L375.3 285.1 L376.1 286.1 L376.8 287.1 L377.4 288.2 L378.0 289.4 L378.6 290.8 L379.2 292.3 L379.7 293.9 L380.1 295.5 L380.4 297.0 L380.5 298.5 L380.5 299.8 L380.6 301.0 L380.5 302.5 L380.3 304.2 L380.0 306.0 L379.6 307.9 L379.1 309.7 L378.5 311.5 L378.0 313.2 L377.7 314.6 L377.3 315.9 L376.8 317.2 L376.2 318.5 L375.6 319.8 L374.9 321.1 L374.2 322.5 L373.4 323.8 L372.8 325.3 L372.2 326.7 L371.7 327.9 L371.2 329.1 L370.8 330.0 L370.4 330.9 L370.0 331.6 L369.5 332.3 L368.9 332.7 L367.9 333.0 L366.7 333.2 L365.4 333.4 L363.9 333.4 L362.3 333.5 L360.8 333.5 L359.3 333.5 L358.0 333.3 L356.7 333.1 L355.4 332.7 L354.0 332.3 L352.5 331.9 L351.0 331.6 L349.3 331.4 L347.7 331.5 L346.1 331.8 L344.5 332.2 L343.0 332.7 L341.5 333.4 L340.1 334.2 L338.8 335.1 L337.6 336.1 L336.6 337.2 L335.7 338.5 L335.0 339.8 L334.4 341.3 L334.0 342.9 L333.8 344.5 L333.8 346.3 L334.2 348.2 L335.1 349.9 L336.2 351.4 L337.5 352.8 L339.1 354.1 L340.9 355.4 L342.9 356.6 L345.1 357.6 L347.5 358.2 L350.0 358.5 L352.6 358.4 L355.3 357.9 L357.9 357.2 L360.5 356.2 L363.0 355.2 L365.4 354.2 L367.7 353.4 L369.9 352.6 L372.1 351.8 L374.3 351.0 L376.5 350.1 L378.7 349.3 L380.9 348.5 L383.0 347.6 L385.0 346.9 L387.1 346.1 L389.1 345.2 L391.0 344.3 L392.9 343.5 L394.7 342.7 L396.5 341.9 L398.2 341.1 L399.9 340.4 L401.6 339.7 L403.4 339.0 L405.2 338.3 L407.2 337.6 L409.1 337.0 L410.9 336.3 L412.6 335.8 L414.0 335.3 L415.1 334.9 L416.5 334.2 L417.5 333.0 L418.0 331.5 L417.9 329.9 L417.2 328.5 L416.0 327.5 L414.5 327.0 L412.9 327.1 L411.9 327.3 L410.4 327.6 L408.7 327.9 L406.8 328.3 L404.7 328.7 L402.5 329.2 L400.4 329.7 L398.4 330.3 L396.4 330.9 L394.5 331.6 L392.6 332.2 L390.7 333.0 L388.8 333.7 L386.8 334.4 L384.9 335.2 L382.9 335.9 L380.9 336.8 L378.9 337.7 L376.8 338.6 L374.7 339.6 L372.6 340.5 L370.4 341.5 L368.3 342.4 L366.1 343.4 L363.8 344.6 L361.4 345.9 L359.1 347.2 L356.9 348.5 L354.8 349.6 L352.9 350.5 L351.3 351.2 L350.0 351.5 L348.8 351.4 L347.5 351.0 L346.1 350.4 L344.7 349.6 L343.5 348.6 L342.4 347.7 L341.5 346.8 L340.9 346.1 L340.7 345.7 L340.5 345.3 L340.4 344.6 L340.4 343.9 L340.5 343.1 L340.8 342.2 L341.1 341.4 L341.4 340.8 L341.8 340.2 L342.5 339.5 L343.3 338.9 L344.2 338.2 L345.2 337.6 L346.3 337.1 L347.4 336.7 L348.3 336.5 L349.2 336.4 L350.2 336.5 L351.4 336.8 L352.7 337.1 L354.0 337.5 L355.5 337.9 L357.1 338.3 L358.7 338.5 L360.2 338.8 L361.7 339.2 L363.3 339.5 L365.0 339.9 L366.8 340.1 L368.6 340.2 L370.5 340.1 L372.5 339.7 L374.4 339.2 L376.2 338.4 L377.9 337.5 L379.4 336.4 L380.8 335.3 L382.1 334.3 L383.4 333.2 L384.6 332.2 L385.7 331.0 L386.9 329.7 L388.2 328.2 L389.4 326.6 L390.6 324.9 L391.8 323.0 L393.0 321.0 L394.0 318.8 L394.7 316.7 L395.4 314.4 L396.1 311.9 L396.6 309.4 L397.1 306.7 L397.4 303.9 L397.6 301.1 L397.5 298.2 L396.9 295.5 L396.1 292.8 L395.1 290.3 L394.0 288.0 L392.8 285.7 L391.5 283.6 L390.1 281.6 L388.6 279.8 L387.0 278.1 L385.3 276.6 L383.5 275.2 L381.6 274.0 L379.7 273.0 L377.8 272.1 L375.8 271.4 L373.8 270.8 L371.7 270.3 L369.6 270.0 L367.5 269.8 L365.4 269.8 L363.3 269.8 L361.3 270.0 L359.4 270.2 L357.5 270.5 L355.7 270.8 L353.9 271.2 L352.1 271.7 L350.2 272.2 L348.3 272.9 L346.5 273.7 L344.7 274.7 L343.0 275.8 L341.4 277.0 L339.9 278.2 L338.4 279.5 L336.8 281.0 L335.3 282.7 L333.9 284.7 L332.5 286.9 L331.1 289.5 L329.7 292.5 L328.4 295.8 L327.1 299.5 L325.8 303.3 L324.5 307.3 L323.3 311.3 L322.2 315.3 L321.1 319.2 L320.1 323.0 L319.1 327.0 L318.2 330.9 L317.3 334.9 L316.5 338.9 L315.7 342.9 L315.0 346.7 L314.3 350.5 L313.7 354.3 L313.1 358.2 L312.7 362.1 L312.3 365.9 L311.9 369.5 L311.5 372.8 L311.0 375.9 L310.6 378.5 L310.1 380.7 L309.6 382.6 L309.0 384.4 L308.5 385.9 L307.9 387.2 L307.4 388.4 L306.9 389.4 L306.6 390.3 L306.5 390.9 L306.6 391.5 L306.9 392.0 L307.3 392.4 L307.9 392.5 L308.5 392.4 L309.0 392.1Z" fill="#0a0a0a" stroke="#0a0a0a" stroke-width="2.2" stroke-linejoin="round" transform="translate(-5.5,3)"/>
<path d="M309.4 391.7 L309.8 390.9 L310.5 390.1 L311.2 389.0 L312.0 387.6 L312.9 386.0 L313.8 384.2 L314.7 382.0 L315.4 379.5 L316.0 376.7 L316.5 373.6 L317.0 370.1 L317.5 366.5 L318.0 362.7 L318.5 358.9 L319.0 355.2 L319.7 351.5 L320.4 347.8 L321.2 344.0 L322.1 340.1 L322.9 336.2 L323.9 332.3 L324.8 328.4 L325.8 324.6 L326.9 320.8 L328.0 317.0 L329.2 313.1 L330.4 309.2 L331.7 305.3 L333.0 301.6 L334.3 298.2 L335.6 295.1 L336.9 292.5 L338.2 290.3 L339.4 288.6 L340.6 287.1 L341.8 285.9 L343.0 284.9 L344.3 283.9 L345.6 283.0 L347.0 282.2 L348.4 281.5 L349.7 280.9 L351.0 280.5 L352.4 280.2 L353.9 279.9 L355.4 279.7 L356.9 279.6 L358.5 279.5 L360.1 279.4 L361.7 279.5 L363.3 279.6 L364.9 279.7 L366.4 280.0 L367.8 280.3 L369.0 280.7 L370.2 281.2 L371.3 281.8 L372.4 282.6 L373.4 283.4 L374.4 284.2 L375.3 285.1 L376.1 286.1 L376.8 287.1 L377.4 288.2 L378.0 289.4 L378.6 290.8 L379.2 292.3 L379.7 293.9 L380.1 295.5 L380.4 297.0 L380.5 298.5 L380.5 299.8 L380.6 301.0 L380.5 302.5 L380.3 304.2 L380.0 306.0 L379.6 307.9 L379.1 309.7 L378.5 311.5 L378.0 313.2 L377.7 314.6 L377.3 315.9 L376.8 317.2 L376.2 318.5 L375.6 319.8 L374.9 321.1 L374.2 322.5 L373.4 323.8 L372.8 325.3 L372.2 326.7 L371.7 327.9 L371.2 329.1 L370.8 330.0 L370.4 330.9 L370.0 331.6 L369.5 332.3 L368.9 332.7 L367.9 333.0 L366.7 333.2 L365.4 333.4 L363.9 333.4 L362.3 333.5 L360.8 333.5 L359.3 333.5 L358.0 333.3 L356.7 333.1 L355.4 332.7 L354.0 332.3 L352.5 331.9 L351.0 331.6 L349.3 331.4 L347.7 331.5 L346.1 331.8 L344.5 332.2 L343.0 332.7 L341.5 333.4 L340.1 334.2 L338.8 335.1 L337.6 336.1 L336.6 337.2 L335.7 338.5 L335.0 339.8 L334.4 341.3 L334.0 342.9 L333.8 344.5 L333.8 346.3 L334.2 348.2 L335.1 349.9 L336.2 351.4 L337.5 352.8 L339.1 354.1 L340.9 355.4 L342.9 356.6 L345.1 357.6 L347.5 358.2 L350.0 358.5 L352.6 358.4 L355.3 357.9 L357.9 357.2 L360.5 356.2 L363.0 355.2 L365.4 354.2 L367.7 353.4 L369.9 352.6 L372.1 351.8 L374.3 351.0 L376.5 350.1 L378.7 349.3 L380.9 348.5 L383.0 347.6 L385.0 346.9 L387.1 346.1 L389.1 345.2 L391.0 344.3 L392.9 343.5 L394.7 342.7 L396.5 341.9 L398.2 341.1 L399.9 340.4 L401.6 339.7 L403.4 339.0 L405.2 338.3 L407.2 337.6 L409.1 337.0 L410.9 336.3 L412.6 335.8 L414.0 335.3 L415.1 334.9 L416.5 334.2 L417.5 333.0 L418.0 331.5 L417.9 329.9 L417.2 328.5 L416.0 327.5 L414.5 327.0 L412.9 327.1 L411.9 327.3 L410.4 327.6 L408.7 327.9 L406.8 328.3 L404.7 328.7 L402.5 329.2 L400.4 329.7 L398.4 330.3 L396.4 330.9 L394.5 331.6 L392.6 332.2 L390.7 333.0 L388.8 333.7 L386.8 334.4 L384.9 335.2 L382.9 335.9 L380.9 336.8 L378.9 337.7 L376.8 338.6 L374.7 339.6 L372.6 340.5 L370.4 341.5 L368.3 342.4 L366.1 343.4 L363.8 344.6 L361.4 345.9 L359.1 347.2 L356.9 348.5 L354.8 349.6 L352.9 350.5 L351.3 351.2 L350.0 351.5 L348.8 351.4 L347.5 351.0 L346.1 350.4 L344.7 349.6 L343.5 348.6 L342.4 347.7 L341.5 346.8 L340.9 346.1 L340.7 345.7 L340.5 345.3 L340.4 344.6 L340.4 343.9 L340.5 343.1 L340.8 342.2 L341.1 341.4 L341.4 340.8 L341.8 340.2 L342.5 339.5 L343.3 338.9 L344.2 338.2 L345.2 337.6 L346.3 337.1 L347.4 336.7 L348.3 336.5 L349.2 336.4 L350.2 336.5 L351.4 336.8 L352.7 337.1 L354.0 337.5 L355.5 337.9 L357.1 338.3 L358.7 338.5 L360.2 338.8 L361.7 339.2 L363.3 339.5 L365.0 339.9 L366.8 340.1 L368.6 340.2 L370.5 340.1 L372.5 339.7 L374.4 339.2 L376.2 338.4 L377.9 337.5 L379.4 336.4 L380.8 335.3 L382.1 334.3 L383.4 333.2 L384.6 332.2 L385.7 331.0 L386.9 329.7 L388.2 328.2 L389.4 326.6 L390.6 324.9 L391.8 323.0 L393.0 321.0 L394.0 318.8 L394.7 316.7 L395.4 314.4 L396.1 311.9 L396.6 309.4 L397.1 306.7 L397.4 303.9 L397.6 301.1 L397.5 298.2 L396.9 295.5 L396.1 292.8 L395.1 290.3 L394.0 288.0 L392.8 285.7 L391.5 283.6 L390.1 281.6 L388.6 279.8 L387.0 278.1 L385.3 276.6 L383.5 275.2 L381.6 274.0 L379.7 273.0 L377.8 272.1 L375.8 271.4 L373.8 270.8 L371.7 270.3 L369.6 270.0 L367.5 269.8 L365.4 269.8 L363.3 269.8 L361.3 270.0 L359.4 270.2 L357.5 270.5 L355.7 270.8 L353.9 271.2 L352.1 271.7 L350.2 272.2 L348.3 272.9 L346.5 273.7 L344.7 274.7 L343.0 275.8 L341.4 277.0 L339.9 278.2 L338.4 279.5 L336.8 281.0 L335.3 282.7 L333.9 284.7 L332.5 286.9 L331.1 289.5 L329.7 292.5 L328.4 295.8 L327.1 299.5 L325.8 303.3 L324.5 307.3 L323.3 311.3 L322.2 315.3 L321.1 319.2 L320.1 323.0 L319.1 327.0 L318.2 330.9 L317.3 334.9 L316.5 338.9 L315.7 342.9 L315.0 346.7 L314.3 350.5 L313.7 354.3 L313.1 358.2 L312.7 362.1 L312.3 365.9 L311.9 369.5 L311.5 372.8 L311.0 375.9 L310.6 378.5 L310.1 380.7 L309.6 382.6 L309.0 384.4 L308.5 385.9 L307.9 387.2 L307.4 388.4 L306.9 389.4 L306.6 390.3 L306.5 390.9 L306.6 391.5 L306.9 392.0 L307.3 392.4 L307.9 392.5 L308.5 392.4 L309.0 392.1Z" fill="url(#gr)"/>
<path d="M441.7 331.8 L440.8 331.3 L439.5 330.6 L437.8 329.7 L435.9 328.7 L433.7 327.7 L431.4 326.8 L429.0 326.0 L426.5 325.5 L424.2 325.2 L421.9 325.1 L419.5 325.1 L417.1 325.2 L414.6 325.6 L412.1 326.1 L409.6 327.0 L407.1 328.2 L404.6 329.3 L402.1 330.7 L399.9 332.3 L397.8 334.0 L395.8 335.9 L394.0 337.9 L392.2 339.9 L390.6 342.0 L389.4 344.4 L388.1 347.2 L386.9 350.1 L385.8 353.2 L384.7 356.5 L383.7 360.0 L383.0 363.6 L382.5 367.3 L382.9 370.9 L383.6 374.5 L384.4 377.8 L385.4 381.1 L386.6 384.2 L387.9 387.2 L389.4 390.0 L391.1 392.6 L393.2 394.8 L395.5 396.8 L397.8 398.4 L400.3 399.7 L402.8 400.7 L405.3 401.3 L407.8 401.6 L410.2 401.4 L412.5 401.5 L414.7 401.4 L416.9 400.9 L419.2 400.3 L421.4 399.3 L423.6 398.0 L425.7 396.3 L427.6 394.4 L429.4 392.2 L431.2 389.6 L432.9 386.7 L434.6 383.7 L436.1 380.5 L437.5 377.3 L438.7 374.2 L439.8 371.2 L440.7 368.1 L441.3 365.0 L441.8 361.8 L442.1 358.8 L442.4 355.8 L442.6 353.1 L442.8 350.6 L443.0 348.4 L443.1 346.3 L443.3 344.4 L443.4 342.5 L443.4 340.9 L443.5 339.4 L443.5 338.2 L443.5 337.1 L443.5 336.3 L443.3 334.9 L442.7 333.7 L441.6 332.9 L440.3 332.5 L438.9 332.7 L437.7 333.3 L436.9 334.4 L436.5 335.7 L436.4 336.6 L436.2 337.7 L436.1 338.9 L435.9 340.4 L435.8 341.9 L435.6 343.7 L435.3 345.5 L435.0 347.6 L434.8 349.9 L434.6 352.5 L434.4 355.2 L434.1 358.0 L433.8 360.8 L433.4 363.6 L432.9 366.3 L432.2 368.8 L431.3 371.5 L430.3 374.5 L429.1 377.5 L427.8 380.4 L426.5 383.2 L425.1 385.8 L423.7 388.0 L422.4 389.6 L421.1 390.7 L419.7 391.6 L418.2 392.2 L416.8 392.6 L415.4 392.8 L414.0 392.9 L412.8 392.8 L411.8 392.6 L411.0 391.7 L410.4 390.7 L409.9 389.6 L409.5 388.4 L409.1 387.2 L408.9 385.9 L408.8 384.7 L408.9 383.4 L408.8 382.1 L408.6 380.4 L408.5 378.5 L408.4 376.4 L408.5 374.3 L408.7 372.2 L409.0 370.3 L409.5 368.7 L409.5 367.2 L409.7 365.3 L410.1 363.2 L410.6 360.9 L411.2 358.6 L412.0 356.3 L412.7 354.1 L413.4 352.0 L413.6 349.9 L413.8 348.0 L414.0 346.3 L414.1 344.7 L414.2 343.3 L414.4 342.1 L414.6 340.9 L414.9 339.8 L415.6 339.2 L416.6 338.6 L417.8 338.0 L419.3 337.5 L420.8 337.1 L422.4 336.8 L424.1 336.6 L425.5 336.5 L426.8 336.5 L428.4 336.8 L430.1 337.3 L432.0 337.9 L433.8 338.6 L435.5 339.2 L437.1 339.8 L438.3 340.2 L440.0 340.5 L441.7 340.2 L443.2 339.2 L444.2 337.7 L444.5 336.0 L444.2 334.3 L443.2 332.8Z" fill="#0a0a0a" stroke="#0a0a0a" stroke-width="2.2" stroke-linejoin="round" transform="translate(-5.5,3)"/>
<path d="M441.7 331.8 L440.8 331.3 L439.5 330.6 L437.8 329.7 L435.9 328.7 L433.7 327.7 L431.4 326.8 L429.0 326.0 L426.5 325.5 L424.2 325.2 L421.9 325.1 L419.5 325.1 L417.1 325.2 L414.6 325.6 L412.1 326.1 L409.6 327.0 L407.1 328.2 L404.6 329.3 L402.1 330.7 L399.9 332.3 L397.8 334.0 L395.8 335.9 L394.0 337.9 L392.2 339.9 L390.6 342.0 L389.4 344.4 L388.1 347.2 L386.9 350.1 L385.8 353.2 L384.7 356.5 L383.7 360.0 L383.0 363.6 L382.5 367.3 L382.9 370.9 L383.6 374.5 L384.4 377.8 L385.4 381.1 L386.6 384.2 L387.9 387.2 L389.4 390.0 L391.1 392.6 L393.2 394.8 L395.5 396.8 L397.8 398.4 L400.3 399.7 L402.8 400.7 L405.3 401.3 L407.8 401.6 L410.2 401.4 L412.5 401.5 L414.7 401.4 L416.9 400.9 L419.2 400.3 L421.4 399.3 L423.6 398.0 L425.7 396.3 L427.6 394.4 L429.4 392.2 L431.2 389.6 L432.9 386.7 L434.6 383.7 L436.1 380.5 L437.5 377.3 L438.7 374.2 L439.8 371.2 L440.7 368.1 L441.3 365.0 L441.8 361.8 L442.1 358.8 L442.4 355.8 L442.6 353.1 L442.8 350.6 L443.0 348.4 L443.1 346.3 L443.3 344.4 L443.4 342.5 L443.4 340.9 L443.5 339.4 L443.5 338.2 L443.5 337.1 L443.5 336.3 L443.3 334.9 L442.7 333.7 L441.6 332.9 L440.3 332.5 L438.9 332.7 L437.7 333.3 L436.9 334.4 L436.5 335.7 L436.4 336.6 L436.2 337.7 L436.1 338.9 L435.9 340.4 L435.8 341.9 L435.6 343.7 L435.3 345.5 L435.0 347.6 L434.8 349.9 L434.6 352.5 L434.4 355.2 L434.1 358.0 L433.8 360.8 L433.4 363.6 L432.9 366.3 L432.2 368.8 L431.3 371.5 L430.3 374.5 L429.1 377.5 L427.8 380.4 L426.5 383.2 L425.1 385.8 L423.7 388.0 L422.4 389.6 L421.1 390.7 L419.7 391.6 L418.2 392.2 L416.8 392.6 L415.4 392.8 L414.0 392.9 L412.8 392.8 L411.8 392.6 L411.0 391.7 L410.4 390.7 L409.9 389.6 L409.5 388.4 L409.1 387.2 L408.9 385.9 L408.8 384.7 L408.9 383.4 L408.8 382.1 L408.6 380.4 L408.5 378.5 L408.4 376.4 L408.5 374.3 L408.7 372.2 L409.0 370.3 L409.5 368.7 L409.5 367.2 L409.7 365.3 L410.1 363.2 L410.6 360.9 L411.2 358.6 L412.0 356.3 L412.7 354.1 L413.4 352.0 L413.6 349.9 L413.8 348.0 L414.0 346.3 L414.1 344.7 L414.2 343.3 L414.4 342.1 L414.6 340.9 L414.9 339.8 L415.6 339.2 L416.6 338.6 L417.8 338.0 L419.3 337.5 L420.8 337.1 L422.4 336.8 L424.1 336.6 L425.5 336.5 L426.8 336.5 L428.4 336.8 L430.1 337.3 L432.0 337.9 L433.8 338.6 L435.5 339.2 L437.1 339.8 L438.3 340.2 L440.0 340.5 L441.7 340.2 L443.2 339.2 L444.2 337.7 L444.5 336.0 L444.2 334.3 L443.2 332.8Z" fill="url(#gr)"/>
<path d="M446.5 338.0 L446.3 339.3 L446.2 340.9 L446.1 342.6 L445.9 344.4 L445.8 346.3 L445.6 348.2 L445.3 350.0 L445.0 351.7 L445.1 353.6 L445.2 355.7 L445.2 358.1 L445.1 360.5 L445.1 362.9 L444.9 365.4 L444.8 367.8 L444.7 370.0 L444.9 372.3 L445.1 374.6 L445.2 377.0 L445.3 379.4 L445.4 381.8 L445.5 384.1 L445.6 386.2 L445.8 388.1 L446.1 389.7 L446.4 391.3 L446.7 392.7 L447.0 394.1 L447.3 395.4 L447.7 396.5 L448.1 397.6 L448.6 398.5 L448.5 399.1 L448.6 399.6 L449.0 400.1 L449.5 400.4 L450.1 400.5 L450.6 400.4 L451.1 400.0 L451.4 399.5 L452.3 399.1 L453.3 398.7 L454.4 398.0 L455.5 397.1 L456.6 396.1 L457.8 394.9 L459.0 393.5 L460.2 391.9 L461.3 390.2 L462.5 388.3 L463.6 386.2 L464.8 383.9 L466.0 381.6 L467.1 379.1 L468.3 376.5 L469.3 374.0 L469.9 371.4 L470.5 368.7 L471.0 365.9 L471.5 363.2 L471.9 360.4 L472.3 357.7 L472.7 355.0 L473.0 352.3 L472.7 349.6 L472.3 346.9 L471.8 344.4 L471.3 342.1 L470.8 340.0 L470.3 338.3 L469.9 337.0 L469.5 336.0 L468.2 331.7 L465.4 328.2 L461.5 326.0 L457.0 325.5 L452.7 326.8 L449.2 329.6 L447.0 333.5Z" fill="#0a0a0a" stroke="#0a0a0a" stroke-width="2.2" stroke-linejoin="round" transform="translate(-5.5,3)"/>
<path d="M446.5 338.0 L446.3 339.3 L446.2 340.9 L446.1 342.6 L445.9 344.4 L445.8 346.3 L445.6 348.2 L445.3 350.0 L445.0 351.7 L445.1 353.6 L445.2 355.7 L445.2 358.1 L445.1 360.5 L445.1 362.9 L444.9 365.4 L444.8 367.8 L444.7 370.0 L444.9 372.3 L445.1 374.6 L445.2 377.0 L445.3 379.4 L445.4 381.8 L445.5 384.1 L445.6 386.2 L445.8 388.1 L446.1 389.7 L446.4 391.3 L446.7 392.7 L447.0 394.1 L447.3 395.4 L447.7 396.5 L448.1 397.6 L448.6 398.5 L448.5 399.1 L448.6 399.6 L449.0 400.1 L449.5 400.4 L450.1 400.5 L450.6 400.4 L451.1 400.0 L451.4 399.5 L452.3 399.1 L453.3 398.7 L454.4 398.0 L455.5 397.1 L456.6 396.1 L457.8 394.9 L459.0 393.5 L460.2 391.9 L461.3 390.2 L462.5 388.3 L463.6 386.2 L464.8 383.9 L466.0 381.6 L467.1 379.1 L468.3 376.5 L469.3 374.0 L469.9 371.4 L470.5 368.7 L471.0 365.9 L471.5 363.2 L471.9 360.4 L472.3 357.7 L472.7 355.0 L473.0 352.3 L472.7 349.6 L472.3 346.9 L471.8 344.4 L471.3 342.1 L470.8 340.0 L470.3 338.3 L469.9 337.0 L469.5 336.0 L468.2 331.7 L465.4 328.2 L461.5 326.0 L457.0 325.5 L452.7 326.8 L449.2 329.6 L447.0 333.5Z" fill="url(#gr)"/>
<path d="M468.4 385.6 L469.1 384.5 L470.0 382.9 L471.0 381.1 L472.1 379.0 L473.3 376.8 L474.5 374.6 L475.7 372.3 L476.8 370.1 L477.8 368.0 L478.8 365.8 L479.9 363.5 L480.9 361.2 L482.0 358.8 L483.0 356.6 L483.9 354.4 L484.8 352.3 L485.5 350.3 L486.1 348.4 L486.7 346.6 L487.3 344.7 L487.9 342.9 L488.3 341.1 L488.7 339.3 L489.0 337.5 L489.1 335.8 L489.2 334.1 L489.3 332.4 L489.2 330.7 L489.0 329.0 L488.7 327.4 L488.2 325.8 L487.6 324.3 L486.8 322.8 L485.9 321.5 L484.8 320.2 L483.6 319.0 L482.3 318.0 L480.8 317.1 L479.2 316.4 L477.2 316.0 L475.3 316.2 L473.5 316.7 L471.9 317.5 L470.4 318.4 L468.9 319.4 L467.6 320.7 L466.5 322.1 L465.7 324.0 L465.4 325.8 L465.5 327.5 L465.9 329.2 L466.5 330.9 L467.4 332.5 L468.5 334.1 L469.8 335.5 L471.5 336.6 L473.3 337.4 L475.3 338.0 L477.5 338.4 L479.7 338.7 L481.9 338.9 L484.1 339.0 L486.2 339.0 L488.2 339.0 L490.0 338.8 L491.8 338.5 L493.4 338.1 L495.0 337.7 L496.4 337.2 L497.8 336.7 L499.2 336.3 L500.7 335.9 L502.4 335.5 L504.3 335.1 L506.3 334.7 L508.4 334.2 L510.3 333.8 L512.1 333.5 L513.5 333.2 L514.6 332.9 L515.7 332.5 L516.5 331.6 L516.9 330.5 L516.9 329.4 L516.5 328.3 L515.6 327.5 L514.5 327.1 L513.4 327.1 L512.3 327.3 L510.8 327.6 L509.1 328.0 L507.1 328.4 L505.1 328.8 L503.1 329.2 L501.1 329.7 L499.3 330.1 L497.6 330.5 L496.0 331.0 L494.5 331.5 L493.2 332.0 L491.8 332.3 L490.6 332.7 L489.3 332.9 L487.8 333.0 L486.2 333.0 L484.3 333.0 L482.3 332.9 L480.3 332.8 L478.4 332.5 L476.7 332.2 L475.4 331.8 L474.5 331.4 L473.9 330.9 L473.4 330.2 L472.9 329.4 L472.6 328.5 L472.3 327.6 L472.2 326.7 L472.3 326.1 L472.3 326.0 L472.4 326.1 L472.8 325.8 L473.4 325.3 L474.3 324.8 L475.2 324.3 L476.0 324.1 L476.6 324.0 L476.8 324.0 L476.8 324.0 L477.1 324.2 L477.7 324.5 L478.3 325.0 L478.9 325.6 L479.5 326.3 L480.0 327.0 L480.4 327.7 L480.7 328.4 L480.9 329.2 L481.1 330.2 L481.2 331.3 L481.3 332.5 L481.2 333.8 L481.2 335.1 L481.0 336.5 L480.8 337.9 L480.5 339.3 L480.1 340.8 L479.7 342.4 L479.1 344.1 L478.5 345.9 L477.9 347.7 L477.2 349.7 L476.6 351.8 L475.9 354.0 L475.2 356.2 L474.4 358.6 L473.6 361.0 L472.8 363.3 L472.0 365.6 L471.2 367.9 L470.5 370.1 L469.7 372.5 L468.8 374.9 L468.0 377.2 L467.2 379.4 L466.5 381.4 L466.0 383.1 L465.6 384.4 L465.5 385.0 L465.6 385.5 L465.9 386.0 L466.4 386.4 L467.0 386.5 L467.5 386.4 L468.0 386.1Z" fill="#0a0a0a" stroke="#0a0a0a" stroke-width="2.2" stroke-linejoin="round" transform="translate(-5.5,3)"/>
<path d="M468.4 385.6 L469.1 384.5 L470.0 382.9 L471.0 381.1 L472.1 379.0 L473.3 376.8 L474.5 374.6 L475.7 372.3 L476.8 370.1 L477.8 368.0 L478.8 365.8 L479.9 363.5 L480.9 361.2 L482.0 358.8 L483.0 356.6 L483.9 354.4 L484.8 352.3 L485.5 350.3 L486.1 348.4 L486.7 346.6 L487.3 344.7 L487.9 342.9 L488.3 341.1 L488.7 339.3 L489.0 337.5 L489.1 335.8 L489.2 334.1 L489.3 332.4 L489.2 330.7 L489.0 329.0 L488.7 327.4 L488.2 325.8 L487.6 324.3 L486.8 322.8 L485.9 321.5 L484.8 320.2 L483.6 319.0 L482.3 318.0 L480.8 317.1 L479.2 316.4 L477.2 316.0 L475.3 316.2 L473.5 316.7 L471.9 317.5 L470.4 318.4 L468.9 319.4 L467.6 320.7 L466.5 322.1 L465.7 324.0 L465.4 325.8 L465.5 327.5 L465.9 329.2 L466.5 330.9 L467.4 332.5 L468.5 334.1 L469.8 335.5 L471.5 336.6 L473.3 337.4 L475.3 338.0 L477.5 338.4 L479.7 338.7 L481.9 338.9 L484.1 339.0 L486.2 339.0 L488.2 339.0 L490.0 338.8 L491.8 338.5 L493.4 338.1 L495.0 337.7 L496.4 337.2 L497.8 336.7 L499.2 336.3 L500.7 335.9 L502.4 335.5 L504.3 335.1 L506.3 334.7 L508.4 334.2 L510.3 333.8 L512.1 333.5 L513.5 333.2 L514.6 332.9 L515.7 332.5 L516.5 331.6 L516.9 330.5 L516.9 329.4 L516.5 328.3 L515.6 327.5 L514.5 327.1 L513.4 327.1 L512.3 327.3 L510.8 327.6 L509.1 328.0 L507.1 328.4 L505.1 328.8 L503.1 329.2 L501.1 329.7 L499.3 330.1 L497.6 330.5 L496.0 331.0 L494.5 331.5 L493.2 332.0 L491.8 332.3 L490.6 332.7 L489.3 332.9 L487.8 333.0 L486.2 333.0 L484.3 333.0 L482.3 332.9 L480.3 332.8 L478.4 332.5 L476.7 332.2 L475.4 331.8 L474.5 331.4 L473.9 330.9 L473.4 330.2 L472.9 329.4 L472.6 328.5 L472.3 327.6 L472.2 326.7 L472.3 326.1 L472.3 326.0 L472.4 326.1 L472.8 325.8 L473.4 325.3 L474.3 324.8 L475.2 324.3 L476.0 324.1 L476.6 324.0 L476.8 324.0 L476.8 324.0 L477.1 324.2 L477.7 324.5 L478.3 325.0 L478.9 325.6 L479.5 326.3 L480.0 327.0 L480.4 327.7 L480.7 328.4 L480.9 329.2 L481.1 330.2 L481.2 331.3 L481.3 332.5 L481.2 333.8 L481.2 335.1 L481.0 336.5 L480.8 337.9 L480.5 339.3 L480.1 340.8 L479.7 342.4 L479.1 344.1 L478.5 345.9 L477.9 347.7 L477.2 349.7 L476.6 351.8 L475.9 354.0 L475.2 356.2 L474.4 358.6 L473.6 361.0 L472.8 363.3 L472.0 365.6 L471.2 367.9 L470.5 370.1 L469.7 372.5 L468.8 374.9 L468.0 377.2 L467.2 379.4 L466.5 381.4 L466.0 383.1 L465.6 384.4 L465.5 385.0 L465.6 385.5 L465.9 386.0 L466.4 386.4 L467.0 386.5 L467.5 386.4 L468.0 386.1Z" fill="url(#gr)"/>
<path d="M512.5 339.7 L512.3 341.0 L512.4 342.6 L512.4 344.2 L512.4 345.8 L512.4 347.4 L512.3 348.9 L512.0 350.2 L511.6 351.2 L511.4 352.3 L511.2 354.0 L510.9 356.0 L510.5 358.3 L510.1 360.8 L509.7 363.3 L509.3 365.9 L509.0 368.5 L509.5 370.8 L509.9 372.9 L510.4 374.9 L510.9 376.8 L511.5 378.5 L512.0 380.2 L512.5 381.7 L513.0 383.0 L513.9 384.3 L514.8 385.6 L515.6 386.8 L516.5 387.9 L517.4 388.8 L518.2 389.7 L519.1 390.4 L520.0 391.0 L520.2 392.1 L520.9 393.1 L521.9 393.8 L523.0 394.0 L524.1 393.8 L525.1 393.1 L525.8 392.1 L526.0 391.0 L526.9 390.4 L527.8 389.7 L528.6 388.8 L529.5 387.9 L530.4 386.8 L531.2 385.6 L532.1 384.3 L533.0 383.0 L533.5 381.5 L534.0 379.9 L534.5 378.3 L534.9 376.6 L535.4 374.9 L535.9 373.1 L536.5 371.3 L537.0 369.5 L536.9 367.7 L536.9 365.6 L536.9 363.2 L537.0 360.5 L537.0 357.8 L536.9 354.9 L536.8 351.9 L536.4 348.8 L535.4 345.8 L534.3 343.1 L533.0 340.8 L531.7 338.8 L530.4 337.1 L529.3 335.8 L528.3 334.9 L527.5 334.3 L525.9 331.6 L523.4 329.8 L520.4 329.0 L517.3 329.5 L514.6 331.1 L512.8 333.6 L512.0 336.6Z" fill="#0a0a0a" stroke="#0a0a0a" stroke-width="2.2" stroke-linejoin="round" transform="translate(-5.5,3)"/>
<path d="M512.5 339.7 L512.3 341.0 L512.4 342.6 L512.4 344.2 L512.4 345.8 L512.4 347.4 L512.3 348.9 L512.0 350.2 L511.6 351.2 L511.4 352.3 L511.2 354.0 L510.9 356.0 L510.5 358.3 L510.1 360.8 L509.7 363.3 L509.3 365.9 L509.0 368.5 L509.5 370.8 L509.9 372.9 L510.4 374.9 L510.9 376.8 L511.5 378.5 L512.0 380.2 L512.5 381.7 L513.0 383.0 L513.9 384.3 L514.8 385.6 L515.6 386.8 L516.5 387.9 L517.4 388.8 L518.2 389.7 L519.1 390.4 L520.0 391.0 L520.2 392.1 L520.9 393.1 L521.9 393.8 L523.0 394.0 L524.1 393.8 L525.1 393.1 L525.8 392.1 L526.0 391.0 L526.9 390.4 L527.8 389.7 L528.6 388.8 L529.5 387.9 L530.4 386.8 L531.2 385.6 L532.1 384.3 L533.0 383.0 L533.5 381.5 L534.0 379.9 L534.5 378.3 L534.9 376.6 L535.4 374.9 L535.9 373.1 L536.5 371.3 L537.0 369.5 L536.9 367.7 L536.9 365.6 L536.9 363.2 L537.0 360.5 L537.0 357.8 L536.9 354.9 L536.8 351.9 L536.4 348.8 L535.4 345.8 L534.3 343.1 L533.0 340.8 L531.7 338.8 L530.4 337.1 L529.3 335.8 L528.3 334.9 L527.5 334.3 L525.9 331.6 L523.4 329.8 L520.4 329.0 L517.3 329.5 L514.6 331.1 L512.8 333.6 L512.0 336.6Z" fill="url(#gr)"/>
<path d="M521.0 322.0 L522.9 322.0 L525.2 322.0 L528.0 321.9 L531.2 321.9 L534.5 321.9 L538.0 321.9 L541.5 321.9 L544.9 322.0 L548.3 322.1 L551.8 322.2 L555.5 322.3 L559.2 322.5 L563.0 322.7 L566.9 322.9 L570.8 323.2 L574.7 323.5 L578.9 323.7 L583.4 324.1 L588.2 324.4 L593.0 324.9 L597.6 325.2 L601.7 325.6 L605.2 325.8 L607.8 326.0 L608.5 325.9 L609.2 325.6 L609.7 325.0 L610.0 324.2 L609.9 323.5 L609.6 322.8 L609.0 322.3 L608.2 322.0 L605.7 321.5 L602.3 320.9 L598.2 320.2 L593.7 319.4 L589.0 318.6 L584.2 317.8 L579.6 317.1 L575.3 316.5 L571.4 316.1 L567.4 315.7 L563.5 315.3 L559.7 315.0 L555.9 314.7 L552.2 314.4 L548.6 314.2 L545.1 314.0 L541.6 313.9 L538.0 313.9 L534.5 313.9 L531.1 313.9 L527.9 313.9 L525.1 314.0 L522.8 314.0 L521.0 314.0 L519.4 314.3 L518.2 315.2 L517.3 316.5 L517.0 318.0 L517.3 319.6 L518.2 320.8 L519.5 321.7Z" fill="#0a0a0a" stroke="#0a0a0a" stroke-width="2.2" stroke-linejoin="round" transform="translate(-5.5,3)"/>
<path d="M521.0 322.0 L522.9 322.0 L525.2 322.0 L528.0 321.9 L531.2 321.9 L534.5 321.9 L538.0 321.9 L541.5 321.9 L544.9 322.0 L548.3 322.1 L551.8 322.2 L555.5 322.3 L559.2 322.5 L563.0 322.7 L566.9 322.9 L570.8 323.2 L574.7 323.5 L578.9 323.7 L583.4 324.1 L588.2 324.4 L593.0 324.9 L597.6 325.2 L601.7 325.6 L605.2 325.8 L607.8 326.0 L608.5 325.9 L609.2 325.6 L609.7 325.0 L610.0 324.2 L609.9 323.5 L609.6 322.8 L609.0 322.3 L608.2 322.0 L605.7 321.5 L602.3 320.9 L598.2 320.2 L593.7 319.4 L589.0 318.6 L584.2 317.8 L579.6 317.1 L575.3 316.5 L571.4 316.1 L567.4 315.7 L563.5 315.3 L559.7 315.0 L555.9 314.7 L552.2 314.4 L548.6 314.2 L545.1 314.0 L541.6 313.9 L538.0 313.9 L534.5 313.9 L531.1 313.9 L527.9 313.9 L525.1 314.0 L522.8 314.0 L521.0 314.0 L519.4 314.3 L518.2 315.2 L517.3 316.5 L517.0 318.0 L517.3 319.6 L518.2 320.8 L519.5 321.7Z" fill="url(#gr)"/>
<path d="M553.0 300.0 L553.0 302.3 L553.0 305.4 L553.0 309.1 L553.0 313.2 L553.0 317.6 L553.0 321.9 L553.0 326.1 L553.0 330.0 L553.1 333.6 L553.1 337.3 L553.1 340.9 L553.2 344.6 L553.2 348.2 L553.3 351.7 L553.4 355.0 L553.5 358.2 L553.7 361.1 L553.8 363.9 L554.0 366.7 L554.2 369.4 L554.4 372.1 L554.7 374.8 L555.1 377.4 L555.7 379.9 L556.7 382.1 L557.8 384.2 L559.0 386.2 L560.3 388.1 L561.8 390.0 L563.6 391.7 L565.7 393.2 L568.0 394.2 L570.3 394.8 L572.4 394.9 L574.5 394.6 L576.6 393.9 L578.5 392.9 L580.3 391.6 L581.8 389.9 L583.3 387.9 L584.8 385.6 L586.4 382.6 L588.0 379.3 L589.6 375.8 L591.1 372.4 L592.5 369.2 L593.6 366.6 L594.3 364.7 L594.5 364.1 L594.4 363.5 L594.1 363.0 L593.7 362.7 L593.1 362.5 L592.5 362.6 L592.0 362.9 L591.7 363.3 L590.6 365.1 L589.1 367.6 L587.4 370.6 L585.6 373.8 L583.7 377.0 L581.9 380.0 L580.2 382.4 L578.7 384.1 L577.4 384.8 L576.2 385.3 L575.3 385.3 L574.5 385.2 L574.1 384.9 L573.8 384.5 L573.7 384.1 L574.0 383.8 L574.5 383.5 L575.0 383.2 L575.3 382.6 L575.5 381.7 L575.7 380.6 L575.9 379.2 L576.1 377.7 L576.3 376.1 L576.2 374.6 L576.2 372.9 L576.1 370.9 L576.2 368.7 L576.2 366.3 L576.3 363.6 L576.4 360.8 L576.5 357.8 L576.5 354.8 L576.6 351.6 L576.6 348.2 L576.7 344.7 L576.8 341.1 L576.9 337.4 L576.9 333.7 L577.0 330.0 L577.0 326.1 L577.0 321.9 L577.0 317.6 L577.0 313.2 L577.0 309.1 L577.0 305.4 L577.0 302.3 L577.0 300.0 L576.1 295.4 L573.5 291.5 L569.6 288.9 L565.0 288.0 L560.4 288.9 L556.5 291.5 L553.9 295.4Z" fill="#0a0a0a" stroke="#0a0a0a" stroke-width="2.2" stroke-linejoin="round" transform="translate(-5.5,3)"/>
<path d="M553.0 300.0 L553.0 302.3 L553.0 305.4 L553.0 309.1 L553.0 313.2 L553.0 317.6 L553.0 321.9 L553.0 326.1 L553.0 330.0 L553.1 333.6 L553.1 337.3 L553.1 340.9 L553.2 344.6 L553.2 348.2 L553.3 351.7 L553.4 355.0 L553.5 358.2 L553.7 361.1 L553.8 363.9 L554.0 366.7 L554.2 369.4 L554.4 372.1 L554.7 374.8 L555.1 377.4 L555.7 379.9 L556.7 382.1 L557.8 384.2 L559.0 386.2 L560.3 388.1 L561.8 390.0 L563.6 391.7 L565.7 393.2 L568.0 394.2 L570.3 394.8 L572.4 394.9 L574.5 394.6 L576.6 393.9 L578.5 392.9 L580.3 391.6 L581.8 389.9 L583.3 387.9 L584.8 385.6 L586.4 382.6 L588.0 379.3 L589.6 375.8 L591.1 372.4 L592.5 369.2 L593.6 366.6 L594.3 364.7 L594.5 364.1 L594.4 363.5 L594.1 363.0 L593.7 362.7 L593.1 362.5 L592.5 362.6 L592.0 362.9 L591.7 363.3 L590.6 365.1 L589.1 367.6 L587.4 370.6 L585.6 373.8 L583.7 377.0 L581.9 380.0 L580.2 382.4 L578.7 384.1 L577.4 384.8 L576.2 385.3 L575.3 385.3 L574.5 385.2 L574.1 384.9 L573.8 384.5 L573.7 384.1 L574.0 383.8 L574.5 383.5 L575.0 383.2 L575.3 382.6 L575.5 381.7 L575.7 380.6 L575.9 379.2 L576.1 377.7 L576.3 376.1 L576.2 374.6 L576.2 372.9 L576.1 370.9 L576.2 368.7 L576.2 366.3 L576.3 363.6 L576.4 360.8 L576.5 357.8 L576.5 354.8 L576.6 351.6 L576.6 348.2 L576.7 344.7 L576.8 341.1 L576.9 337.4 L576.9 333.7 L577.0 330.0 L577.0 326.1 L577.0 321.9 L577.0 317.6 L577.0 313.2 L577.0 309.1 L577.0 305.4 L577.0 302.3 L577.0 300.0 L576.1 295.4 L573.5 291.5 L569.6 288.9 L565.0 288.0 L560.4 288.9 L556.5 291.5 L553.9 295.4Z" fill="url(#gr)"/>
<path d="M655.5 298.3 L655.7 297.3 L655.9 296.0 L656.1 294.6 L656.3 293.0 L656.6 291.3 L656.9 289.7 L657.3 288.3 L657.8 287.1 L658.4 285.9 L659.1 284.7 L659.8 283.5 L660.6 282.4 L661.5 281.3 L662.4 280.3 L663.3 279.5 L664.2 278.7 L665.3 278.0 L666.4 277.3 L667.5 276.7 L668.8 276.2 L670.0 275.7 L671.2 275.3 L672.4 275.1 L673.5 275.0 L674.7 275.1 L676.0 275.3 L677.3 275.6 L678.5 276.0 L679.6 276.5 L680.6 277.0 L681.3 277.5 L681.8 278.1 L682.1 278.8 L682.5 279.6 L682.8 280.5 L683.1 281.5 L683.3 282.5 L683.4 283.6 L683.4 284.6 L683.3 285.5 L683.1 286.2 L682.9 287.0 L682.5 287.9 L682.1 289.1 L681.7 290.5 L681.2 292.1 L680.6 293.9 L680.1 295.8 L679.6 297.8 L679.1 299.7 L678.6 301.8 L678.0 303.9 L677.4 306.1 L676.8 308.4 L676.1 310.7 L675.3 313.2 L674.6 316.0 L673.9 318.8 L673.3 321.5 L672.6 324.1 L671.9 326.5 L671.1 328.8 L670.3 330.9 L669.4 332.8 L668.2 334.7 L666.8 337.0 L665.0 339.5 L663.1 342.2 L661.0 344.9 L658.9 347.6 L656.8 350.3 L654.9 352.9 L653.7 355.5 L652.7 357.8 L651.7 360.0 L650.9 362.0 L650.1 363.9 L649.4 365.7 L648.6 367.5 L647.8 369.3 L647.0 371.5 L646.2 373.6 L645.5 375.5 L644.9 377.3 L644.4 379.0 L644.0 380.4 L643.7 381.6 L643.4 382.6 L642.7 383.1 L641.8 383.5 L640.8 383.9 L639.8 384.1 L638.7 384.3 L637.8 384.3 L637.0 384.2 L636.3 384.1 L635.5 383.7 L634.6 383.0 L633.7 382.0 L632.8 380.9 L632.0 379.7 L631.4 378.6 L631.1 377.7 L631.0 377.2 L631.1 376.4 L631.4 375.2 L632.0 373.8 L632.9 372.3 L633.8 370.9 L634.9 369.7 L635.8 368.7 L636.6 368.1 L637.4 367.8 L638.5 367.6 L639.7 367.5 L641.0 367.5 L642.5 367.8 L643.9 368.1 L645.2 368.6 L646.3 369.1 L647.1 369.8 L648.0 370.7 L648.9 371.9 L649.9 373.4 L650.9 375.1 L652.1 376.8 L653.4 378.6 L654.8 380.2 L656.2 381.5 L657.4 382.7 L658.8 384.1 L660.3 385.6 L662.0 387.0 L664.0 388.3 L666.3 389.5 L668.8 390.3 L671.5 390.9 L674.4 391.2 L677.4 391.4 L680.5 391.4 L683.7 391.3 L686.8 391.0 L689.9 390.5 L693.0 389.9 L695.9 388.8 L698.9 387.4 L701.7 385.9 L704.4 384.2 L707.0 382.5 L709.4 380.9 L711.5 379.4 L713.3 378.1 L714.9 377.0 L716.3 375.8 L717.4 374.7 L718.4 373.7 L719.1 372.8 L719.8 372.0 L720.2 371.3 L720.6 370.8 L720.9 370.5 L721.0 370.1 L721.0 369.7 L720.8 369.4 L720.5 369.1 L720.1 369.0 L719.7 369.0 L719.4 369.2 L718.7 369.5 L717.9 370.0 L717.1 370.5 L716.1 371.0 L715.1 371.7 L713.8 372.3 L712.4 373.1 L710.7 373.9 L708.7 374.8 L706.4 376.0 L703.9 377.3 L701.3 378.5 L698.6 379.7 L696.0 380.8 L693.4 381.6 L691.0 382.1 L688.6 382.5 L686.0 382.8 L683.3 382.9 L680.5 382.9 L677.8 382.8 L675.3 382.5 L673.1 382.1 L671.2 381.7 L669.7 381.2 L668.5 380.5 L667.4 379.8 L666.2 378.8 L665.1 377.7 L663.8 376.5 L662.5 375.1 L661.2 373.8 L659.9 372.7 L658.8 371.5 L657.5 370.1 L656.2 368.6 L654.9 367.0 L653.4 365.5 L651.6 364.1 L649.7 362.9 L647.8 362.1 L645.8 361.4 L643.8 360.9 L641.7 360.6 L639.6 360.5 L637.5 360.6 L635.4 361.1 L633.4 361.9 L631.5 363.1 L629.7 364.6 L628.1 366.3 L626.6 368.2 L625.3 370.2 L624.2 372.3 L623.4 374.5 L623.0 376.8 L623.1 379.2 L623.7 381.5 L624.6 383.6 L625.7 385.6 L627.0 387.5 L628.5 389.1 L630.0 390.6 L631.7 391.9 L633.6 393.0 L635.6 393.8 L637.6 394.3 L639.8 394.6 L641.9 394.7 L644.1 394.5 L646.4 394.1 L648.6 393.4 L651.2 392.8 L653.6 391.9 L656.0 390.8 L658.2 389.5 L660.3 388.3 L662.3 387.0 L664.3 385.8 L666.2 384.7 L668.1 383.2 L669.9 381.7 L671.8 380.1 L673.6 378.5 L675.4 376.8 L677.3 375.0 L679.2 373.1 L681.1 371.1 L682.7 368.7 L684.5 366.0 L686.5 363.0 L688.6 359.8 L690.7 356.4 L692.8 352.8 L694.8 349.1 L696.6 345.2 L698.1 341.3 L699.3 337.5 L700.2 333.9 L700.9 330.4 L701.5 327.2 L701.9 324.2 L702.3 321.4 L702.7 318.8 L703.0 316.1 L703.3 313.3 L703.5 310.6 L703.7 308.0 L703.9 305.4 L703.9 302.9 L704.0 300.4 L703.9 298.2 L703.8 296.1 L703.6 294.1 L703.4 292.0 L703.1 289.8 L702.8 287.5 L702.3 285.2 L701.6 282.9 L700.7 280.5 L699.5 278.4 L698.3 276.5 L696.9 274.7 L695.4 273.0 L693.8 271.5 L692.1 270.1 L690.2 268.9 L688.2 267.9 L686.1 267.1 L684.1 266.6 L682.0 266.2 L680.0 266.1 L678.0 266.1 L676.1 266.3 L674.2 266.6 L672.5 267.0 L670.7 267.4 L669.0 267.9 L667.3 268.6 L665.6 269.3 L664.0 270.2 L662.5 271.2 L661.1 272.2 L659.8 273.3 L658.5 274.5 L657.3 275.9 L656.2 277.3 L655.3 278.7 L654.4 280.2 L653.6 281.8 L652.8 283.3 L652.2 284.9 L651.7 286.7 L651.3 288.6 L651.0 290.5 L650.8 292.3 L650.7 294.0 L650.6 295.5 L650.6 296.8 L650.5 297.7 L650.6 298.7 L651.0 299.5 L651.8 300.2 L652.7 300.5 L653.7 300.4 L654.5 300.0 L655.2 299.2Z" fill="#0a0a0a" stroke="#0a0a0a" stroke-width="2.2" stroke-linejoin="round" transform="translate(-5.5,3)"/>
<path d="M655.5 298.3 L655.7 297.3 L655.9 296.0 L656.1 294.6 L656.3 293.0 L656.6 291.3 L656.9 289.7 L657.3 288.3 L657.8 287.1 L658.4 285.9 L659.1 284.7 L659.8 283.5 L660.6 282.4 L661.5 281.3 L662.4 280.3 L663.3 279.5 L664.2 278.7 L665.3 278.0 L666.4 277.3 L667.5 276.7 L668.8 276.2 L670.0 275.7 L671.2 275.3 L672.4 275.1 L673.5 275.0 L674.7 275.1 L676.0 275.3 L677.3 275.6 L678.5 276.0 L679.6 276.5 L680.6 277.0 L681.3 277.5 L681.8 278.1 L682.1 278.8 L682.5 279.6 L682.8 280.5 L683.1 281.5 L683.3 282.5 L683.4 283.6 L683.4 284.6 L683.3 285.5 L683.1 286.2 L682.9 287.0 L682.5 287.9 L682.1 289.1 L681.7 290.5 L681.2 292.1 L680.6 293.9 L680.1 295.8 L679.6 297.8 L679.1 299.7 L678.6 301.8 L678.0 303.9 L677.4 306.1 L676.8 308.4 L676.1 310.7 L675.3 313.2 L674.6 316.0 L673.9 318.8 L673.3 321.5 L672.6 324.1 L671.9 326.5 L671.1 328.8 L670.3 330.9 L669.4 332.8 L668.2 334.7 L666.8 337.0 L665.0 339.5 L663.1 342.2 L661.0 344.9 L658.9 347.6 L656.8 350.3 L654.9 352.9 L653.7 355.5 L652.7 357.8 L651.7 360.0 L650.9 362.0 L650.1 363.9 L649.4 365.7 L648.6 367.5 L647.8 369.3 L647.0 371.5 L646.2 373.6 L645.5 375.5 L644.9 377.3 L644.4 379.0 L644.0 380.4 L643.7 381.6 L643.4 382.6 L642.7 383.1 L641.8 383.5 L640.8 383.9 L639.8 384.1 L638.7 384.3 L637.8 384.3 L637.0 384.2 L636.3 384.1 L635.5 383.7 L634.6 383.0 L633.7 382.0 L632.8 380.9 L632.0 379.7 L631.4 378.6 L631.1 377.7 L631.0 377.2 L631.1 376.4 L631.4 375.2 L632.0 373.8 L632.9 372.3 L633.8 370.9 L634.9 369.7 L635.8 368.7 L636.6 368.1 L637.4 367.8 L638.5 367.6 L639.7 367.5 L641.0 367.5 L642.5 367.8 L643.9 368.1 L645.2 368.6 L646.3 369.1 L647.1 369.8 L648.0 370.7 L648.9 371.9 L649.9 373.4 L650.9 375.1 L652.1 376.8 L653.4 378.6 L654.8 380.2 L656.2 381.5 L657.4 382.7 L658.8 384.1 L660.3 385.6 L662.0 387.0 L664.0 388.3 L666.3 389.5 L668.8 390.3 L671.5 390.9 L674.4 391.2 L677.4 391.4 L680.5 391.4 L683.7 391.3 L686.8 391.0 L689.9 390.5 L693.0 389.9 L695.9 388.8 L698.9 387.4 L701.7 385.9 L704.4 384.2 L707.0 382.5 L709.4 380.9 L711.5 379.4 L713.3 378.1 L714.9 377.0 L716.3 375.8 L717.4 374.7 L718.4 373.7 L719.1 372.8 L719.8 372.0 L720.2 371.3 L720.6 370.8 L720.9 370.5 L721.0 370.1 L721.0 369.7 L720.8 369.4 L720.5 369.1 L720.1 369.0 L719.7 369.0 L719.4 369.2 L718.7 369.5 L717.9 370.0 L717.1 370.5 L716.1 371.0 L715.1 371.7 L713.8 372.3 L712.4 373.1 L710.7 373.9 L708.7 374.8 L706.4 376.0 L703.9 377.3 L701.3 378.5 L698.6 379.7 L696.0 380.8 L693.4 381.6 L691.0 382.1 L688.6 382.5 L686.0 382.8 L683.3 382.9 L680.5 382.9 L677.8 382.8 L675.3 382.5 L673.1 382.1 L671.2 381.7 L669.7 381.2 L668.5 380.5 L667.4 379.8 L666.2 378.8 L665.1 377.7 L663.8 376.5 L662.5 375.1 L661.2 373.8 L659.9 372.7 L658.8 371.5 L657.5 370.1 L656.2 368.6 L654.9 367.0 L653.4 365.5 L651.6 364.1 L649.7 362.9 L647.8 362.1 L645.8 361.4 L643.8 360.9 L641.7 360.6 L639.6 360.5 L637.5 360.6 L635.4 361.1 L633.4 361.9 L631.5 363.1 L629.7 364.6 L628.1 366.3 L626.6 368.2 L625.3 370.2 L624.2 372.3 L623.4 374.5 L623.0 376.8 L623.1 379.2 L623.7 381.5 L624.6 383.6 L625.7 385.6 L627.0 387.5 L628.5 389.1 L630.0 390.6 L631.7 391.9 L633.6 393.0 L635.6 393.8 L637.6 394.3 L639.8 394.6 L641.9 394.7 L644.1 394.5 L646.4 394.1 L648.6 393.4 L651.2 392.8 L653.6 391.9 L656.0 390.8 L658.2 389.5 L660.3 388.3 L662.3 387.0 L664.3 385.8 L666.2 384.7 L668.1 383.2 L669.9 381.7 L671.8 380.1 L673.6 378.5 L675.4 376.8 L677.3 375.0 L679.2 373.1 L681.1 371.1 L682.7 368.7 L684.5 366.0 L686.5 363.0 L688.6 359.8 L690.7 356.4 L692.8 352.8 L694.8 349.1 L696.6 345.2 L698.1 341.3 L699.3 337.5 L700.2 333.9 L700.9 330.4 L701.5 327.2 L701.9 324.2 L702.3 321.4 L702.7 318.8 L703.0 316.1 L703.3 313.3 L703.5 310.6 L703.7 308.0 L703.9 305.4 L703.9 302.9 L704.0 300.4 L703.9 298.2 L703.8 296.1 L703.6 294.1 L703.4 292.0 L703.1 289.8 L702.8 287.5 L702.3 285.2 L701.6 282.9 L700.7 280.5 L699.5 278.4 L698.3 276.5 L696.9 274.7 L695.4 273.0 L693.8 271.5 L692.1 270.1 L690.2 268.9 L688.2 267.9 L686.1 267.1 L684.1 266.6 L682.0 266.2 L680.0 266.1 L678.0 266.1 L676.1 266.3 L674.2 266.6 L672.5 267.0 L670.7 267.4 L669.0 267.9 L667.3 268.6 L665.6 269.3 L664.0 270.2 L662.5 271.2 L661.1 272.2 L659.8 273.3 L658.5 274.5 L657.3 275.9 L656.2 277.3 L655.3 278.7 L654.4 280.2 L653.6 281.8 L652.8 283.3 L652.2 284.9 L651.7 286.7 L651.3 288.6 L651.0 290.5 L650.8 292.3 L650.7 294.0 L650.6 295.5 L650.6 296.8 L650.5 297.7 L650.6 298.7 L651.0 299.5 L651.8 300.2 L652.7 300.5 L653.7 300.4 L654.5 300.0 L655.2 299.2Z" fill="url(#gr)"/>
<path d="M533 383 C539 378 545 371 552 364" fill="none" stroke="#0a0a0a" stroke-width="2.6" stroke-linecap="round"/>
<path d="M291.0 266.0 L290.8 269.4 L290.7 272.8 L290.5 276.1 L290.3 279.5 L290.2 282.9 L290.0 286.2 L288.9 289.6 L288.3 292.9 L287.9 296.3 L287.5 299.7 L287.1 303.0 L286.7 306.4 L286.3 309.8 L286.0 313.1 L285.7 316.5 L285.4 319.9 L285.0 323.2 L284.7 326.6 L284.4 330.0 L284.1 333.3 L283.9 336.7 L283.6 340.1 L283.3 343.4 L283.0 346.8 L283.1 348.0 L283.7 349.2 L284.5 350.1 L285.6 350.7 L286.8 351.0 L288.0 350.9 L289.2 350.3 L290.1 349.5 L290.7 348.4 L291.0 347.2 L291.0 343.8 L291.1 340.4 L291.1 337.1 L291.2 333.7 L291.2 330.3 L291.3 326.9 L291.3 323.5 L291.3 320.1 L291.3 316.8 L291.3 313.4 L291.3 310.0 L291.3 306.6 L291.3 303.2 L291.2 299.8 L291.1 296.5 L291.0 293.1 L290.8 289.7 L290.0 286.2 L290.2 282.9 L290.3 279.5 L290.5 276.1 L290.7 272.8 L290.8 269.4 L291.0 266.0Z" fill="none" stroke="#ffffff" stroke-width="1.1"/>
<path d="M376.0 286.0 L376.2 287.7 L376.4 289.4 L376.6 291.1 L376.8 292.8 L377.0 294.5 L377.2 296.2 L376.6 298.1 L376.5 299.8 L376.5 301.5 L376.4 303.3 L376.5 305.0 L376.5 306.7 L376.5 308.5 L376.6 310.2 L376.7 311.9 L376.7 313.6 L376.8 315.4 L376.9 317.1 L377.0 318.8 L377.1 320.5 L377.2 322.3 L377.3 324.0 L377.4 325.7 L377.5 327.4 L377.8 328.5 L378.4 329.4 L379.3 330.1 L380.3 330.4 L381.4 330.5 L382.5 330.2 L383.4 329.6 L384.1 328.7 L384.4 327.7 L384.5 326.6 L384.2 324.9 L383.9 323.2 L383.5 321.5 L383.2 319.8 L382.9 318.1 L382.6 316.4 L382.3 314.7 L381.9 313.0 L381.6 311.3 L381.2 309.6 L380.9 307.9 L380.5 306.3 L380.1 304.6 L379.7 302.9 L379.3 301.2 L378.8 299.5 L378.3 297.9 L377.2 296.2 L377.0 294.5 L376.8 292.8 L376.6 291.1 L376.4 289.4 L376.2 287.7 L376.0 286.0Z" fill="none" stroke="#ffffff" stroke-width="1.1"/>
<path d="M406.0 339.0 L405.2 340.5 L404.5 342.1 L403.8 343.6 L403.0 345.2 L402.2 346.7 L401.5 348.2 L400.0 349.4 L399.0 350.8 L398.0 352.2 L397.0 353.7 L396.1 355.2 L395.2 356.6 L394.3 358.1 L393.4 359.6 L392.5 361.0 L391.7 362.5 L390.8 364.0 L389.9 365.5 L389.1 367.0 L388.2 368.5 L387.4 370.0 L386.5 371.5 L385.7 373.0 L384.9 374.5 L384.5 375.5 L384.6 376.6 L384.9 377.6 L385.6 378.5 L386.5 379.1 L387.5 379.5 L388.6 379.4 L389.6 379.1 L390.5 378.4 L391.1 377.5 L391.8 375.9 L392.5 374.4 L393.1 372.8 L393.8 371.2 L394.4 369.6 L395.1 368.0 L395.7 366.4 L396.3 364.8 L397.0 363.2 L397.6 361.6 L398.2 360.0 L398.8 358.4 L399.4 356.8 L400.0 355.1 L400.5 353.5 L401.0 351.8 L401.5 350.2 L401.5 348.2 L402.2 346.7 L403.0 345.2 L403.8 343.6 L404.5 342.1 L405.2 340.5 L406.0 339.0Z" fill="none" stroke="#ffffff" stroke-width="1.1"/>
<path d="M460.0 336.0 L459.9 337.1 L459.8 338.2 L459.6 339.2 L459.5 340.3 L459.4 341.4 L459.2 342.5 L458.4 343.5 L458.0 344.6 L457.7 345.6 L457.3 346.7 L457.1 347.7 L456.8 348.8 L456.5 349.9 L456.3 350.9 L456.0 352.0 L455.8 353.1 L455.5 354.1 L455.3 355.2 L455.1 356.3 L454.9 357.4 L454.7 358.4 L454.4 359.5 L454.2 360.6 L454.0 361.7 L454.1 362.6 L454.4 363.5 L455.0 364.2 L455.8 364.7 L456.7 365.0 L457.6 364.9 L458.5 364.6 L459.2 364.0 L459.7 363.2 L460.0 362.3 L460.0 361.3 L460.1 360.2 L460.1 359.1 L460.1 358.0 L460.2 356.9 L460.2 355.8 L460.2 354.7 L460.2 353.6 L460.2 352.5 L460.2 351.4 L460.2 350.3 L460.2 349.2 L460.2 348.1 L460.2 347.0 L460.1 345.9 L460.0 344.8 L459.8 343.7 L459.2 342.5 L459.4 341.4 L459.5 340.3 L459.6 339.2 L459.8 338.2 L459.9 337.1 L460.0 336.0Z" fill="none" stroke="#ffffff" stroke-width="1.1"/>
<path d="M525.0 340.0 L525.0 341.3 L525.1 342.7 L525.1 344.0 L525.2 345.3 L525.2 346.7 L525.2 348.0 L524.5 349.4 L524.2 350.7 L523.9 352.0 L523.8 353.4 L523.6 354.7 L523.5 356.1 L523.4 357.4 L523.3 358.7 L523.2 360.1 L523.1 361.4 L523.0 362.8 L522.9 364.1 L522.8 365.4 L522.7 366.8 L522.7 368.1 L522.6 369.4 L522.6 370.8 L522.5 372.1 L522.7 373.2 L523.2 374.1 L524.0 374.9 L525.0 375.4 L526.1 375.5 L527.2 375.3 L528.1 374.8 L528.9 374.0 L529.4 373.0 L529.5 371.9 L529.4 370.6 L529.2 369.2 L529.1 367.9 L528.9 366.6 L528.8 365.2 L528.6 363.9 L528.4 362.6 L528.3 361.3 L528.1 359.9 L527.9 358.6 L527.7 357.3 L527.5 355.9 L527.3 354.6 L527.1 353.3 L526.8 352.0 L526.5 350.6 L526.1 349.3 L525.2 348.0 L525.2 346.7 L525.2 345.3 L525.1 344.0 L525.1 342.7 L525.0 341.3 L525.0 340.0Z" fill="none" stroke="#ffffff" stroke-width="1.1"/>
<path d="M563.0 300.0 L563.0 302.0 L562.9 304.1 L562.9 306.1 L562.8 308.2 L562.8 310.2 L562.8 312.2 L562.0 314.3 L561.7 316.3 L561.4 318.4 L561.2 320.4 L561.0 322.4 L560.8 324.5 L560.6 326.5 L560.4 328.5 L560.3 330.6 L560.1 332.6 L559.9 334.7 L559.8 336.7 L559.7 338.7 L559.5 340.8 L559.4 342.8 L559.3 344.9 L559.1 346.9 L559.0 348.9 L559.1 349.9 L559.5 350.7 L560.2 351.4 L561.0 351.8 L561.9 352.0 L562.9 351.9 L563.7 351.5 L564.4 350.8 L564.8 350.0 L565.0 349.1 L565.0 347.0 L564.9 345.0 L564.9 342.9 L564.8 340.9 L564.8 338.8 L564.7 336.8 L564.6 334.8 L564.6 332.7 L564.5 330.7 L564.4 328.6 L564.3 326.6 L564.2 324.5 L564.1 322.5 L564.0 320.4 L563.8 318.4 L563.7 316.4 L563.4 314.3 L562.8 312.2 L562.8 310.2 L562.8 308.2 L562.9 306.1 L562.9 304.1 L563.0 302.0 L563.0 300.0Z" fill="none" stroke="#ffffff" stroke-width="1.1"/>
<path d="M689.0 306.0 L688.4 307.5 L687.8 309.1 L687.1 310.6 L686.5 312.2 L685.9 313.7 L685.2 315.2 L684.0 316.5 L683.1 318.0 L682.2 319.4 L681.4 320.9 L680.7 322.4 L679.9 323.8 L679.1 325.3 L678.4 326.8 L677.7 328.3 L676.9 329.8 L676.2 331.3 L675.5 332.8 L674.8 334.3 L674.0 335.8 L673.3 337.3 L672.6 338.9 L671.9 340.4 L671.2 341.9 L671.0 342.8 L671.1 343.7 L671.5 344.6 L672.1 345.3 L672.9 345.8 L673.8 346.0 L674.7 345.9 L675.6 345.5 L676.3 344.9 L676.8 344.1 L677.3 342.6 L677.9 341.0 L678.4 339.4 L679.0 337.8 L679.5 336.2 L680.0 334.7 L680.5 333.1 L681.1 331.5 L681.6 329.9 L682.1 328.3 L682.6 326.7 L683.1 325.2 L683.6 323.6 L684.1 321.9 L684.5 320.3 L684.9 318.7 L685.3 317.1 L685.2 315.2 L685.9 313.7 L686.5 312.2 L687.1 310.6 L687.8 309.1 L688.4 307.5 L689.0 306.0Z" fill="none" stroke="#ffffff" stroke-width="1.1"/>
<circle cx="287" cy="363" r="2.3" fill="none" stroke="#fff" stroke-width="1" opacity="0.9"/>
<circle cx="396" cy="384" r="2.3" fill="none" stroke="#fff" stroke-width="1" opacity="0.9"/>
<circle cx="458" cy="380" r="2.3" fill="none" stroke="#fff" stroke-width="1" opacity="0.9"/>
<circle cx="524" cy="377" r="2.3" fill="none" stroke="#fff" stroke-width="1" opacity="0.9"/>
<circle cx="563" cy="363" r="2.3" fill="none" stroke="#fff" stroke-width="1" opacity="0.9"/>
<circle cx="672" cy="354" r="2.3" fill="none" stroke="#fff" stroke-width="1" opacity="0.9"/>
<circle cx="363" cy="337" r="2.3" fill="none" stroke="#fff" stroke-width="1" opacity="0.9"/>
</g></g></svg>
<svg style="position:absolute;left:11px;top:42px;" width="15" height="11" viewBox="0 0 15 11"><path d="M3.5 9.5 C1 9.5 0.8 6.2 3 5.8 C3 3.5 5.5 2.2 7.2 3.5 C8.2 1.2 12.2 1.5 12.3 4.6 C14.6 4.8 14.6 9.5 12 9.5Z" fill="#e6e6e6"/></svg>
<svg style="position:absolute;left:34px;top:41px;" width="12" height="13" viewBox="0 0 12 13"><path d="M1 6.5V12h10V6.5" fill="none" stroke="#e6e6e6" stroke-width="1.5"/><path d="M6 9V1.5M3 4.2L6 1.2L9 4.2" fill="none" stroke="#e6e6e6" stroke-width="1.5"/></svg>
<svg style="position:absolute;left:54.5px;top:42px;" width="14" height="12" viewBox="0 0 14 12"><ellipse cx="7" cy="5" rx="6.5" ry="4.5" fill="#e6e6e6"/><path d="M5 8.5L4 11.5L8 9" fill="#e6e6e6"/><path d="M3 4h8M3 6h7M7 1v8" stroke="#7a7a7a" stroke-width="0.6"/></svg>
<svg style="position:absolute;left:76.5px;top:42px;" width="14" height="12" viewBox="0 0 14 12"><rect x="0.5" y="0.5" width="13" height="8.5" fill="#e6e6e6"/><path d="M5.5 9L7 11.5L8.5 9Z" fill="#e6e6e6"/><path d="M2.5 3h9M2.5 5.5h6" stroke="#3c3c3c" stroke-width="1.2"/></svg>
<svg style="position:absolute;left:99.5px;top:41px;" width="11" height="13" viewBox="0 0 11 13"><path d="M1 1H7L10 4V12H1Z" fill="none" stroke="#e6e6e6" stroke-width="1.2"/><path d="M7 1V4H10" fill="none" stroke="#e6e6e6" stroke-width="1"/><path d="M3 6.5h5M3 8.5h5M3 10.5h5" stroke="#e6e6e6" stroke-width="1"/></svg>
<svg style="position:absolute;left:119px;top:41px;" width="14" height="14" viewBox="0 0 14 14"><rect x="0.5" y="0.5" width="13" height="10" fill="none" stroke="#e6e6e6" stroke-width="1"/><path d="M0.5 4h13M0.5 7.5h13M4 0.5v10" stroke="#e6e6e6" stroke-width="1"/><circle cx="3.5" cy="11" r="2.5" fill="#3c3c3c" stroke="#e6e6e6" stroke-width="1"/></svg>
<svg style="position:absolute;left:141px;top:41px;" width="14" height="14" viewBox="0 0 14 14"><path d="M1 5h9v8H1Z" fill="#e6e6e6"/><path d="M1 9h9M5.5 5v8" stroke="#3c3c3c" stroke-width="1"/><path d="M7 7L12.5 1.5" stroke="#e6e6e6" stroke-width="1.6"/></svg>
<svg style="position:absolute;left:175px;top:42px;" width="16" height="10" viewBox="0 0 16 10"><path d="M1 4.5L6 0.5V3C11 3 14.5 5 15 9.5C13 7.2 10.5 6.3 6 6.3V8.8Z" fill="#e6e6e6"/></svg>
<svg style="position:absolute;left:202px;top:42px;" width="16" height="10" viewBox="0 0 16 10"><path d="M15 4.5L10 0.5V3C5 3 1.5 5 1 9.5C3 7.2 5.5 6.3 10 6.3V8.8Z" fill="#e6e6e6"/></svg>
<svg style="position:absolute;left:239px;top:41px;" width="13" height="13" viewBox="0 0 13 13"><circle cx="6.5" cy="6.5" r="5.3" fill="none" stroke="#cfe6fb" stroke-width="1.2"/><path d="M2.8 2.8L10.2 10.2" stroke="#cfe6fb" stroke-width="1.2"/></svg>
<svg style="position:absolute;left:259px;top:40px;" width="16" height="14" viewBox="0 0 16 14"><path d="M1 4L15 1.5M1 6.5L15 4M1 9L15 6.5M1 11.5L15 9M1 13.5L15 11.5" stroke="#e6e6e6" stroke-width="0.9"/></svg>
<svg style="position:absolute;left:281px;top:41px;" width="14" height="13" viewBox="0 0 14 13"><path d="M2.5 0V13M5.5 0V13M8.5 0V13M11.5 0V13M0 2.5H14M0 5.5H14M0 8.5H14M0 11.5H14" stroke="#e6e6e6" stroke-width="1"/></svg>
<svg style="position:absolute;left:303px;top:40px;" width="15" height="14" viewBox="0 0 15 14"><path d="M1.5 7L14 1M1.5 7L14 3.5M1.5 7L14 6M1.5 7L14 8.5M1.5 7L14 11M1.5 7L14 13.5" stroke="#e6e6e6" stroke-width="0.9"/></svg>
<svg style="position:absolute;left:324px;top:40px;" width="15" height="14" viewBox="0 0 15 14"><path d="M7.5 0.5V13.5M1 7H14M2.5 2L12.5 12M12.5 2L2.5 12" stroke="#e6e6e6" stroke-width="1.2"/></svg>
<svg style="position:absolute;left:345.5px;top:40px;" width="14" height="14" viewBox="0 0 14 14"><circle cx="7" cy="7" r="6.2" fill="none" stroke="#e6e6e6" stroke-width="0.9"/><circle cx="7" cy="7" r="4.2" fill="none" stroke="#e6e6e6" stroke-width="0.9"/><circle cx="7" cy="7" r="2.2" fill="none" stroke="#e6e6e6" stroke-width="0.9"/></svg>
<svg style="position:absolute;left:367px;top:40px;" width="15" height="14" viewBox="0 0 15 14"><path d="M2 2.5C8 1 11 3 7 6.5C3 10 6 12 12.5 12" fill="none" stroke="#e6e6e6" stroke-width="1"/><circle cx="2" cy="2.5" r="1.5" fill="#e6e6e6"/><circle cx="12.5" cy="12" r="1.5" fill="#e6e6e6"/></svg>
<svg style="position:absolute;left:389px;top:40px;" width="14" height="14" viewBox="0 0 14 14"><circle cx="7" cy="7" r="5.5" fill="none" stroke="#e6e6e6" stroke-width="1.2"/><circle cx="12.50" cy="7.00" r="1.3" fill="#e6e6e6"/><circle cx="10.89" cy="10.89" r="1.3" fill="#e6e6e6"/><circle cx="7.00" cy="12.50" r="1.3" fill="#e6e6e6"/><circle cx="3.11" cy="10.89" r="1.3" fill="#e6e6e6"/><circle cx="1.50" cy="7.00" r="1.3" fill="#e6e6e6"/><circle cx="3.11" cy="3.11" r="1.3" fill="#e6e6e6"/><circle cx="7.00" cy="1.50" r="1.3" fill="#e6e6e6"/><circle cx="10.89" cy="3.11" r="1.3" fill="#e6e6e6"/></svg>
<svg style="position:absolute;left:410px;top:40px;" width="15" height="14" viewBox="0 0 15 14"><path d="M12.50 7.00 L14.17 8.33 L13.78 9.60 L11.66 9.78 L11.04 10.54 L11.28 12.65 L10.10 13.28 L8.48 11.90 L7.50 12.00 L6.17 13.67 L4.90 13.28 L4.72 11.16 L3.96 10.54 L1.85 10.78 L1.22 9.60 L2.60 7.98 L2.50 7.00 L0.83 5.67 L1.22 4.40 L3.34 4.22 L3.96 3.46 L3.72 1.35 L4.90 0.72 L6.52 2.10 L7.50 2.00 L8.83 0.33 L10.10 0.72 L10.28 2.84 L11.04 3.46 L13.15 3.22 L13.78 4.40 L12.40 6.02Z" fill="none" stroke="#e6e6e6" stroke-width="1.0"/><circle cx="7.5" cy="7" r="2.3" fill="none" stroke="#e6e6e6" stroke-width="1.0"/></svg>
<svg style="position:absolute;left:6px;top:73px;" width="17" height="16" viewBox="0 0 17 16"><path d="M15 1.5L6.5 10" stroke="#ffffff" stroke-width="2.2"/><path d="M6.5 9.5C4 9 2 11 2.5 14.5C5 14 7.5 12.5 6.5 9.5Z" fill="#ffffff"/></svg>
<svg style="position:absolute;left:6px;top:97px;" width="16" height="15" viewBox="0 0 16 15"><path d="M9.5 2L14 6.5L7.5 13L3 8.5Z" fill="none" stroke="#e6e6e6" stroke-width="1.3"/><path d="M3 8.5L5.8 5.7L10.3 10.2L7.5 13Z" fill="#e6e6e6"/></svg>
<svg style="position:absolute;left:7px;top:122px;" width="14" height="14" viewBox="0 0 14 14"><rect x="1.8" y="2" width="10" height="10" fill="none" stroke="#d8d8d8" stroke-width="1.1"/></svg>
<svg style="position:absolute;left:6px;top:147px;" width="16" height="15" viewBox="0 0 16 15"><path d="M14.5 1.5L8 8" stroke="#e6e6e6" stroke-width="2"/><circle cx="3" cy="6.5" r="1.3" fill="#e6e6e6"/><circle cx="5.5" cy="9.5" r="1.3" fill="#e6e6e6"/><circle cx="8" cy="12.5" r="1.3" fill="#e6e6e6"/><circle cx="3" cy="12.5" r="1.1" fill="#e6e6e6"/></svg>
<svg style="position:absolute;left:6px;top:177px;" width="16" height="16" viewBox="0 0 16 16"><path d="M8 1V15M1 8H15" stroke="#e6e6e6" stroke-width="1.2"/><path d="M8 0.5L10.5 3.5H5.5ZM8 15.5L10.5 12.5H5.5ZM0.5 8L3.5 5.5V10.5ZM15.5 8L12.5 5.5V10.5Z" fill="#e6e6e6"/></svg>
<svg style="position:absolute;left:7px;top:208px;" width="14" height="14" viewBox="0 0 14 14"><rect x="1.5" y="1.5" width="11" height="11" fill="#e0e0e0"/></svg>
<svg style="position:absolute;left:5px;top:231px;" width="18" height="18" viewBox="0 0 18 18"><path d="M3 7L9 3.5L14 10L8 14Z" fill="#e6e6e6"/><path d="M4.5 6C4.5 2 7.5 1 9 3" fill="none" stroke="#e6e6e6" stroke-width="1.2"/><path d="M15 10C16.5 12 17 14 15.5 15C14 14 14.3 12 15 10Z" fill="#e6e6e6"/></svg>
<div style="position:absolute;left:6.5px;top:258px;width:15px;height:13px;background:linear-gradient(to right,#9a9a9a,#505050);border:1.2px solid #c8c8c8;box-sizing:border-box"></div>
<svg style="position:absolute;left:6px;top:288px;" width="16" height="15" viewBox="0 0 16 15"><rect x="2" y="2" width="12" height="11" fill="none" stroke="#e6e6e6" stroke-width="1.5" stroke-dasharray="2 1.6"/></svg>
<svg style="position:absolute;left:5px;top:312px;" width="18" height="17" viewBox="0 0 18 17"><path d="M4.5 13.5C2.5 11 3.5 7 8 5C11 3.2 14.5 2.8 15 5.5C15.5 8.5 12.5 9 10.5 11C8.5 13.5 6 14.8 4.5 13.5Z" fill="none" stroke="#e6e6e6" stroke-width="1.2" stroke-dasharray="1.6 1.3"/></svg>
<svg style="position:absolute;left:5px;top:336px;" width="17" height="17" viewBox="0 0 17 17"><path d="M2 15L10 7" stroke="#e6e6e6" stroke-width="2.3"/><path d="M12 2V6M10 4H14M14.5 1L13.5 2.5M15 5.5L13.5 5" stroke="#e6e6e6" stroke-width="1"/></svg>
<svg style="position:absolute;left:5px;top:361px;" width="17" height="17" viewBox="0 0 17 17"><path d="M3 5V14H12" fill="none" stroke="#e6e6e6" stroke-width="1.4" stroke-dasharray="2 1.6"/><path d="M7 10L14.5 2.5" stroke="#e6e6e6" stroke-width="2"/></svg>
<svg style="position:absolute;left:5px;top:386px;" width="17" height="17" viewBox="0 0 17 17"><path d="M3 6V14H11" fill="none" stroke="#e6e6e6" stroke-width="1.4" stroke-dasharray="2 1.6"/><path d="M10 1.5L14.5 6L9.5 11L5 6.5Z" fill="#e6e6e6"/></svg>
<svg style="position:absolute;left:6px;top:415px;" width="16" height="19" viewBox="0 0 16 19"><path d="M1.5 2H14.5V6.5H13.6C13.3 4.5 12.5 3.6 10.3 3.6H9.3V15.3C9.3 16.3 9.8 16.6 11.3 16.7V17.5H4.7V16.7C6.2 16.6 6.7 16.3 6.7 15.3V3.6H5.7C3.5 3.6 2.7 4.5 2.4 6.5H1.5Z" fill="#e8e8e8"/></svg>
<svg style="position:absolute;left:5px;top:440px;" width="18" height="19" viewBox="0 0 18 19"><path d="M9 13H4L2.5 7.5L7 3.5L12 5.5L11.5 8" fill="none" stroke="#e6e6e6" stroke-width="1.4"/><path d="M9 7.5L16 12.5L12.8 13.2L14.8 17L13.2 17.7L11.3 14L9 16Z" fill="#e6e6e6"/></svg>
<svg style="position:absolute;left:5px;top:466px;" width="18" height="17" viewBox="0 0 18 17"><path d="M3 14.5L12.5 3.5C13.5 2.3 15.3 2.5 15.8 3.5C16.3 4.5 15.8 5.8 14.8 6.6L4.5 15Z" fill="none" stroke="#e6e6e6" stroke-width="1.3"/><path d="M3 14.5L8.5 8.3L10 10L4.5 15Z" fill="#e6e6e6"/></svg>
<svg style="position:absolute;left:5px;top:496px;" width="18" height="18" viewBox="0 0 18 18"><path d="M3.5 16C2.5 15 2.8 14 3.6 13.2L9.8 7L11.8 9L5.6 15.2C4.8 16 4.3 16.6 3.5 16Z" fill="none" stroke="#e6e6e6" stroke-width="1.3"/><path d="M8.8 6L13 10.2" stroke="#e6e6e6" stroke-width="1.6"/><path d="M11 7.8L13.5 5.3C12.8 4 13.5 2.5 15 2.8C16.5 3 16.8 4.8 15.6 5.6L13 8.2Z" fill="#e6e6e6"/></svg>
<div style="position:absolute;left:13px;top:530px;width:2px;height:2px;background:#888"></div>
<svg style="position:absolute;left:38px;top:193px;" width="15" height="15" viewBox="0 0 15 15"><path d="M7.5 1C3.5 1 1 3.8 1 7.2C1 11 4 13.8 7.5 13.8C9 13.8 9.2 12.6 8.5 11.8C7.8 11 8.3 10 9.5 10H11.5C13.3 10 14 8.8 14 7C14 3.5 11.3 1 7.5 1Z" fill="#e6e6e6"/><circle cx="4.2" cy="6.5" r="1.2" fill="#3a3a3a"/><circle cx="6.8" cy="3.8" r="1.2" fill="#3a3a3a"/><circle cx="10" cy="4.5" r="1.2" fill="#3a3a3a"/><circle cx="4.8" cy="10" r="1.2" fill="#3a3a3a"/></svg>
<svg style="position:absolute;left:59.5px;top:193px;" width="16" height="15" viewBox="0 0 16 15"><path d="M6.5 1C3 1 1 3.5 1 6.5C1 9.5 3.5 12 6.5 12C8 12 8 11 7.5 10.2C7 9.5 7.5 8.8 8.5 8.8H10C11.5 8.8 12 7.8 12 6.5C12 3.2 9.8 1 6.5 1Z" fill="#e6e6e6"/><circle cx="3.8" cy="5.8" r="1" fill="#3a3a3a"/><circle cx="6" cy="3.5" r="1" fill="#3a3a3a"/><circle cx="9" cy="4" r="1" fill="#3a3a3a"/><rect x="8" y="9" width="7.5" height="5" fill="#3a3a3a" stroke="#e6e6e6" stroke-width="1"/><path d="M9.5 11.5h4.5" stroke="#e6e6e6" stroke-width="1"/></svg>

<svg style="position:absolute;left:137px;top:420px;" width="11" height="11" viewBox="0 0 11 11"><path d="M9.10 5.50 L10.60 6.51 L10.30 7.49 L8.49 7.50 L8.05 8.05 L8.39 9.82 L7.49 10.30 L6.20 9.03 L5.50 9.10 L4.49 10.60 L3.51 10.30 L3.50 8.49 L2.95 8.05 L1.18 8.39 L0.70 7.49 L1.97 6.20 L1.90 5.50 L0.40 4.49 L0.70 3.51 L2.51 3.50 L2.95 2.95 L2.61 1.18 L3.51 0.70 L4.80 1.97 L5.50 1.90 L6.51 0.40 L7.49 0.70 L7.50 2.51 L8.05 2.95 L9.82 2.61 L10.30 3.51 L9.03 4.80Z" fill="#ffffff" stroke="#ffffff" stroke-width="0"/><circle cx="5.5" cy="5.5" r="1.6" fill="#4c93d4" stroke="none"/></svg>
<svg style="position:absolute;left:36px;top:515px;" width="13" height="14" viewBox="0 0 13 14"><path d="M3 8C0.5 8 0.5 4.5 3 4.5C3 1.5 7 0.5 8.5 3C10.5 1.5 13 3 12.5 5.5C14 6 13.8 8 12 8Z" fill="#e6e6e6"/><path d="M6.5 13V8M4.2 9.8L6.5 7.2L8.8 9.8" fill="none" stroke="#3a3a3a" stroke-width="1.6"/><path d="M5.5 9.5H7.5V13H5.5Z" fill="#e6e6e6"/></svg>
<svg style="position:absolute;left:59px;top:515px;" width="12" height="14" viewBox="0 0 12 14"><path d="M1 0.8H7.5L11 4.3V13.2H1Z" fill="none" stroke="#e6e6e6" stroke-width="1.1"/><path d="M7.5 0.8V4.3H11" fill="none" stroke="#e6e6e6" stroke-width="0.9"/></svg>
<svg style="position:absolute;left:80px;top:515px;" width="20" height="14" viewBox="0 0 20 14"><path d="M1 0.8H7.5L11 4.3V13.2H1Z" fill="none" stroke="#e6e6e6" stroke-width="1.1"/><path d="M3 5h3v3H3zM6 8h3v3H6z" fill="#e6e6e6"/><path d="M14 6h5l-2.5 3z" fill="#e6e6e6"/></svg>
<svg style="position:absolute;left:106px;top:515px;" width="13" height="14" viewBox="0 0 13 14"><path d="M1 0.8H7.5L11 4.3V13.2H1Z" fill="none" stroke="#e6e6e6" stroke-width="1.1"/><text x="6" y="11" text-anchor="middle" font-family="Liberation Sans" font-size="8" fill="#e6e6e6">S</text></svg>
<svg style="position:absolute;left:127px;top:516px;" width="15" height="12" viewBox="0 0 15 12"><path d="M1 1.5H5.5L7 3H14V11H1Z" fill="#e6e6e6"/></svg>
<svg style="position:absolute;left:857px;top:83.5px;" width="14" height="14" viewBox="0 0 14 14"><circle cx="6" cy="6" r="4.6" fill="none" stroke="#e6e6e6" stroke-width="1.6"/><path d="M9.3 9.3L13 13" stroke="#e6e6e6" stroke-width="2.2"/><path d="M6 3.8V8.2" stroke="#e6e6e6" stroke-width="1.3"/></svg>
<svg style="position:absolute;left:883.5px;top:83.5px;" width="14" height="14" viewBox="0 0 14 14"><circle cx="6" cy="6" r="4.6" fill="none" stroke="#e6e6e6" stroke-width="1.6"/><path d="M9.3 9.3L13 13" stroke="#e6e6e6" stroke-width="2.2"/><path d="M6 3.8V8.2M3.8 6H8.2" stroke="#e6e6e6" stroke-width="1.3"/></svg>
<svg style="position:absolute;left:904.5px;top:83px;" width="14" height="14" viewBox="0 0 14 14"><rect x="1" y="1" width="12" height="12" fill="none" stroke="#bbb" stroke-width="1"/><path d="M2 2L5.5 5.5M12 2L8.5 5.5M2 12L5.5 8.5M12 12L8.5 8.5" stroke="#e6e6e6" stroke-width="1.5"/><path d="M2 2h3v1H3v2H2zM12 2h-3v1h2v2h1zM2 12h3v-1H3V9H2zM12 12h-3v-1h2V9h1z" fill="#e6e6e6"/></svg>
<svg style="position:absolute;left:926px;top:83.5px;" width="14" height="14" viewBox="0 0 14 14"><circle cx="6" cy="6" r="4.6" fill="none" stroke="#e6e6e6" stroke-width="1.6"/><path d="M9.3 9.3L13 13" stroke="#e6e6e6" stroke-width="2.2"/><path d="M3.8 6H8.2" stroke="#e6e6e6" stroke-width="1.3"/></svg>
<svg style="position:absolute;left:952px;top:83px;" width="15" height="14" viewBox="0 0 15 14"><path d="M7.5 1.5A5.5 5.5 0 1 1 2.3 5.5" fill="none" stroke="#e6e6e6" stroke-width="1.6"/><path d="M1 2.5L4.5 1.5L3.5 6Z" fill="#e6e6e6"/><rect x="5" y="4.5" width="5" height="5" fill="#e6e6e6" transform="rotate(-20 7.5 7)"/></svg>
<svg style="position:absolute;left:974px;top:83px;" width="15" height="14" viewBox="0 0 15 14"><rect x="3" y="3" width="9" height="8" fill="#e6e6e6"/><path d="M1 1L3 3M14 1L12 3M1 13L3 11M14 13L12 11" stroke="#e6e6e6" stroke-width="1.5"/></svg>
<svg style="position:absolute;left:994.5px;top:83px;" width="15" height="14" viewBox="0 0 15 14"><path d="M7.5 1.5A5.5 5.5 0 1 0 12.7 5.5" fill="none" stroke="#e6e6e6" stroke-width="1.6"/><path d="M14 2.5L10.5 1.5L11.5 6Z" fill="#e6e6e6"/><rect x="5" y="4.5" width="5" height="5" fill="#e6e6e6" transform="rotate(20 7.5 7)"/></svg>
<div style="position:absolute;left:877px;top:86px;width:1px;height:9px;background:#666"></div>
<div style="position:absolute;left:946px;top:86px;width:1px;height:9px;background:#666"></div>
<svg style="position:absolute;left:859px;top:449px;" width="12" height="14" viewBox="0 0 12 14"><path d="M1 0.8H7.5L11 4.3V13.2H1Z" fill="none" stroke="#e6e6e6" stroke-width="1.1"/><path d="M7.5 0.8V4.3H11" fill="none" stroke="#e6e6e6" stroke-width="0.9"/></svg>
<svg style="position:absolute;left:880.5px;top:449px;" width="12" height="14" viewBox="0 0 12 14"><path d="M1 0.8H7.5L11 4.3V13.2H1Z" fill="none" stroke="#e6e6e6" stroke-width="1.1"/><text x="6" y="11" text-anchor="middle" font-family="Liberation Sans" font-size="7.5" fill="#e6e6e6">8</text></svg>
<svg style="position:absolute;left:902px;top:449px;" width="12" height="14" viewBox="0 0 12 14"><path d="M1 0.8H7.5L11 4.3V13.2H1Z" fill="none" stroke="#e6e6e6" stroke-width="1.1"/><text x="6" y="11" text-anchor="middle" font-family="Liberation Sans" font-size="7.5" fill="#e6e6e6">1</text></svg>
<svg style="position:absolute;left:924px;top:449px;" width="20" height="15" viewBox="0 0 20 15"><path d="M1 0.8H7.5L11 4.3V12H1Z" fill="none" stroke="#e6e6e6" stroke-width="1.1"/><path d="M8.5 9.5V14.5M6 12H11" stroke="#e6e6e6" stroke-width="1.6"/><path d="M14 6h5l-2.5 3z" fill="#e6e6e6"/></svg>
<svg style="position:absolute;left:950.5px;top:450px;" width="15" height="12" viewBox="0 0 15 12"><path d="M1 1.5H5.5L7 3H14V11H1Z" fill="#e6e6e6"/></svg>
<div style="position:absolute;left:970.5px;top:451px;width:1px;height:11px;background:#666"></div>
<svg style="position:absolute;left:977.5px;top:449px;" width="14" height="14" viewBox="0 0 14 14"><rect x="4" y="1" width="9" height="9" fill="none" stroke="#e6e6e6" stroke-width="1.1"/><rect x="1" y="4" width="9" height="9" fill="#3c3c3c" stroke="#e6e6e6" stroke-width="1.1"/></svg>
<svg style="position:absolute;left:988px;top:218px;" width="15" height="15" viewBox="0 0 15 15"><path d="M12.50 7.50 L14.37 8.87 L13.97 10.18 L11.66 10.28 L11.04 11.04 L11.39 13.32 L10.18 13.97 L8.48 12.40 L7.50 12.50 L6.13 14.37 L4.82 13.97 L4.72 11.66 L3.96 11.04 L1.68 11.39 L1.03 10.18 L2.60 8.48 L2.50 7.50 L0.63 6.13 L1.03 4.82 L3.34 4.72 L3.96 3.96 L3.61 1.68 L4.82 1.03 L6.52 2.60 L7.50 2.50 L8.87 0.63 L10.18 1.03 L10.28 3.34 L11.04 3.96 L13.32 3.61 L13.97 4.82 L12.40 6.52Z" fill="#ffffff" stroke="#ffffff" stroke-width="0"/><circle cx="7.5" cy="7.5" r="2" fill="#4a93d3" stroke="none"/></svg>
<svg style="position:absolute;left:857px;top:515px;" width="14" height="14" viewBox="0 0 14 14"><path d="M3 8C0.5 8 0.5 4.5 3 4.5C3 1.5 7 0.5 8.5 3C10.5 1.5 13 3 12.5 5.5C14 6 13.8 8 12 8Z" fill="#e6e6e6"/><path d="M5.5 8H7.5V11H9.5L6.5 14L3.5 11H5.5Z" fill="#e6e6e6" stroke="#3c3c3c" stroke-width="0.6"/></svg>
<svg style="position:absolute;left:878px;top:516px;" width="15" height="12" viewBox="0 0 15 12"><path d="M1 1.5H5.5L7 3H13V5H3.5L1 11Z" fill="#e6e6e6"/><path d="M3.5 5.5H14.5L12 11H1Z" fill="#e6e6e6"/></svg>
<svg style="position:absolute;left:901px;top:516px;" width="12" height="12" viewBox="0 0 12 12"><path d="M2 2L10 10M10 2L2 10" stroke="#e6e6e6" stroke-width="1.8"/></svg>
<div style="position:absolute;left:920px;top:517px;width:1px;height:10px;background:#666"></div>
<svg style="position:absolute;left:927.5px;top:515.5px;" width="14" height="14" viewBox="0 0 14 14"><circle cx="6" cy="6" r="4.6" fill="none" stroke="#e6e6e6" stroke-width="1.6"/><path d="M9.3 9.3L13 13" stroke="#e6e6e6" stroke-width="2.2"/><path d="M6 3.8V8.2M3.8 6H8.2" stroke="#e6e6e6" stroke-width="1.3"/></svg>
<svg style="position:absolute;left:948.5px;top:515px;" width="14" height="14" viewBox="0 0 14 14"><rect x="1" y="1" width="12" height="12" fill="none" stroke="#bbb" stroke-width="1"/><path d="M2 2L5.5 5.5M12 2L8.5 5.5M2 12L5.5 8.5M12 12L8.5 8.5" stroke="#e6e6e6" stroke-width="1.5"/></svg>
<svg style="position:absolute;left:970.5px;top:515.5px;" width="14" height="14" viewBox="0 0 14 14"><circle cx="6" cy="6" r="4.6" fill="none" stroke="#e6e6e6" stroke-width="1.6"/><path d="M9.3 9.3L13 13" stroke="#e6e6e6" stroke-width="2.2"/><path d="M3.8 6H8.2" stroke="#e6e6e6" stroke-width="1.3"/></svg>
<div style="position:absolute;left:990px;top:517px;width:1px;height:10px;background:#666"></div>
<svg style="position:absolute;left:8px;top:557px;" width="14" height="14" viewBox="0 0 14 14"><path d="M0 0h6.5v6.5H0zM7.5 0H14v6.5H7.5zM0 7.5h6.5V14H0zM7.5 7.5H14V14H7.5z" fill="#111"/></svg>
<svg style="position:absolute;left:37px;top:556px;" width="14" height="16" viewBox="0 0 14 16"><circle cx="8.5" cy="5.5" r="4.3" fill="none" stroke="#111" stroke-width="1.3"/><path d="M5.5 8.5L1 14" stroke="#111" stroke-width="1.5"/></svg>
<svg style="position:absolute;left:65px;top:557px;" width="14" height="14" viewBox="0 0 14 14"><circle cx="7" cy="7" r="5.7" fill="none" stroke="#111" stroke-width="1.8"/></svg>
<svg style="position:absolute;left:93px;top:557px;" width="14" height="14" viewBox="0 0 14 14"><rect x="2.5" y="3.5" width="7" height="7" fill="none" stroke="#111" stroke-width="1.3"/><path d="M1 1h10M1 13h10M12.5 3v8" stroke="#111" stroke-width="1.3"/></svg>
<svg style="position:absolute;left:125px;top:557px;" width="14" height="14" viewBox="0 0 14 14"><path d="M0.5 2.5h5l1 1.5h7V12H0.5z" fill="#e8b23a"/><path d="M0.5 5h13V13H0.5z" fill="#f7cf55"/><rect x="4.5" y="8" width="5" height="5" fill="#2f7ad0"/></svg>
<svg style="position:absolute;left:156px;top:556px;" width="13" height="14" viewBox="0 0 13 14"><circle cx="6.5" cy="7" r="6" fill="#d93b2b"/><circle cx="6.5" cy="7" r="3.8" fill="#f5f0ee"/><path d="M8.5 5.5A2.3 2.3 0 1 0 8.5 8.5" fill="none" stroke="#d93b2b" stroke-width="1.3"/></svg>
<svg style="position:absolute;left:184px;top:557px;" width="15" height="14" viewBox="0 0 15 14"><rect x="0.5" y="0.5" width="14" height="9.5" fill="#4aa8e8" stroke="#2d7fc0" stroke-width="0.8"/><path d="M2 12.5h11" stroke="#2d7fc0" stroke-width="1.5"/></svg>
<svg style="position:absolute;left:213px;top:556px;" width="15" height="15" viewBox="0 0 15 15"><circle cx="7.5" cy="7.5" r="7" fill="#1f8fd8"/><path d="M3.5 8.5C3.5 4.5 9 3.5 11 6.5C11.5 8 10 9 7.5 9C6 9 5.5 10.5 7.5 11.5C9.5 12.5 12 12 13.5 10.5C12.5 13.5 10 15 7 14.5C4.5 14 3.5 11 3.5 8.5Z" fill="#48d18a"/><path d="M5.5 9.5C6 7 9.5 6.5 10.5 8" fill="none" stroke="#0b5fa8" stroke-width="1"/></svg>
<svg style="position:absolute;left:244px;top:556px;" width="14" height="14" viewBox="0 0 14 14"><rect x="0.5" y="0.5" width="13" height="13" rx="1.5" fill="#e9f3e9" stroke="#6aa86a" stroke-width="0.8"/><text x="7" y="11.5" text-anchor="middle" font-family="Liberation Sans" font-weight="700" font-size="11" fill="#1e8a3a">X</text></svg>
<svg style="position:absolute;left:273px;top:556px;" width="14" height="14" viewBox="0 0 14 14"><rect x="0.5" y="0.5" width="13" height="13" rx="1.5" fill="#e6eef9" stroke="#7b9fd8" stroke-width="0.8"/><text x="7" y="11.5" text-anchor="middle" font-family="Liberation Sans" font-weight="700" font-size="11" fill="#2b5fc4">W</text></svg>
<svg style="position:absolute;left:303px;top:556px;" width="14" height="14" viewBox="0 0 14 14"><rect x="0.5" y="0.5" width="13" height="13" rx="1.5" fill="#fbece6" stroke="#d88a6a" stroke-width="0.8"/><text x="7" y="11.5" text-anchor="middle" font-family="Liberation Sans" font-weight="700" font-size="11" fill="#d2461e">P</text></svg>
<svg style="position:absolute;left:333px;top:557px;" width="13" height="12" viewBox="0 0 13 12"><rect x="0" y="0" width="13" height="12" fill="#2d6fc8"/><path d="M0 12L5 6L8 9L10 7L13 10V12Z" fill="#9fd0ff"/><circle cx="9.5" cy="3" r="1.3" fill="#e8f4ff"/></svg>
<svg style="position:absolute;left:362px;top:556px;" width="14" height="14" viewBox="0 0 14 14"><circle cx="7" cy="7" r="6.5" fill="#e34133"/><path d="M7 0.5A6.5 6.5 0 0 1 12.6 10.3L7 7Z" fill="#f6c026"/><path d="M12.6 10.3A6.5 6.5 0 0 1 1.4 10.3L7 7Z" fill="#2fa54f"/><circle cx="7" cy="7" r="2.8" fill="#3d7fe0" stroke="#fff" stroke-width="1"/><circle cx="10.5" cy="11" r="3" fill="#111"/></svg>
<svg style="position:absolute;left:393px;top:557px;" width="11" height="11" viewBox="0 0 11 11"><circle cx="5.5" cy="5.5" r="5" fill="#f0a030"/><path d="M5.5 0.5A5 5 0 0 1 10.5 5.5H5.5Z" fill="#e8453c"/><path d="M10.5 5.5A5 5 0 0 1 5.5 10.5V5.5Z" fill="#2aa8a0"/><circle cx="6" cy="6" r="3.2" fill="#1e9a6a"/></svg>
<div style="position:absolute;left:210px;top:574px;width:22px;height:2px;background:#1a73c8"></div>
<div style="position:absolute;left:328px;top:574px;width:22px;height:2px;background:#1a73c8"></div>
<div style="position:absolute;left:358px;top:574px;width:22px;height:2px;background:#1a73c8"></div>
<div style="position:absolute;left:384px;top:574px;width:28.69999999999999px;height:2px;background:#1a73c8"></div>
<svg style="position:absolute;left:697px;top:555px;" width="16" height="16" viewBox="0 0 16 16"><circle cx="7" cy="8" r="6" fill="#f5b21d"/><path d="M5 13C2.5 13 2.5 9.5 5 9.5C5.5 7 9 7 10 9C13 9 14.5 13 11.5 13Z" fill="#e8f2fb" stroke="#9ab8d0" stroke-width="0.5"/></svg>
<svg style="position:absolute;left:813px;top:559px;" width="11" height="8" viewBox="0 0 11 8"><path d="M1 7L5.5 2L10 7" fill="none" stroke="#111" stroke-width="1.3"/></svg>
<svg style="position:absolute;left:830px;top:558px;" width="14" height="10" viewBox="0 0 14 10"><rect x="4" y="2" width="9.5" height="6" fill="#111"/><path d="M0.5 5h3M2 2v6" stroke="#111" stroke-width="1.2"/></svg>
<svg style="position:absolute;left:850px;top:557px;" width="14" height="12" viewBox="0 0 14 12"><path d="M1 4h3l4-3v10l-4-3H1z" fill="none" stroke="#111" stroke-width="1.1"/><path d="M10 3.5C11.2 5 11.2 7 10 8.5M12 2C14 4 14 8 12 10" fill="none" stroke="#111" stroke-width="1"/></svg>
<svg style="position:absolute;left:871px;top:557px;" width="12" height="12" viewBox="0 0 12 12"><path d="M1 11A10 10 0 0 1 11 1M3.5 11A7.5 7.5 0 0 1 11 3.5M6 11A5 5 0 0 1 11 6" fill="none" stroke="#111" stroke-width="1"/><circle cx="10" cy="10" r="1.3" fill="#111"/></svg>
<svg style="position:absolute;left:889px;top:556px;" width="10" height="15" viewBox="0 0 10 15"><rect x="1" y="4" width="6" height="7" rx="1" fill="none" stroke="#111" stroke-width="1.1"/><path d="M7 6.5l2-1v4l-2-1M2 2h5M2 13h5" stroke="#111" stroke-width="1"/></svg>
<svg style="position:absolute;left:990px;top:557px;" width="15" height="14" viewBox="0 0 15 14"><path d="M0.5 0.5h14v10h-8l-3 3v-3h-3z" fill="#111"/><path d="M3 3.5h9M3 6h9" stroke="#d9e4ee" stroke-width="1"/></svg>
<div class="t" style="left:19.0px;top:5.44px;font-size:10px;transform:scaleX(0.9494);transform-origin:0 0;color:#000000;font-weight:400;">MediBang Paint Pro (64bit)</div><div class="t" style="left:7.5px;top:21.91px;font-size:10.5px;transform:scaleX(0.7937);transform-origin:0 0;color:#c8c8c8;font-weight:400;">Tệp(F)</div><div class="t" style="left:45.8px;top:21.91px;font-size:10.5px;transform:scaleX(0.8548);transform-origin:0 0;color:#c8c8c8;font-weight:400;">Chỉnh sửa(E)</div><div class="t" style="left:112.5px;top:21.91px;font-size:10.5px;transform:scaleX(0.8438);transform-origin:0 0;color:#c8c8c8;font-weight:400;">Lớp(L)</div><div class="t" style="left:152.5px;top:21.91px;font-size:10.5px;transform:scaleX(0.8637);transform-origin:0 0;color:#c8c8c8;font-weight:400;">Bộ lọc(R)</div><div class="t" style="left:203.3px;top:21.91px;font-size:10.5px;transform:scaleX(0.8668);transform-origin:0 0;color:#c8c8c8;font-weight:400;">Chọn(S)</div><div class="t" style="left:250.6px;top:21.91px;font-size:10.5px;transform:scaleX(0.9222);transform-origin:0 0;color:#c8c8c8;font-weight:400;">Chụp(N)</div><div class="t" style="left:300.6px;top:21.91px;font-size:10.5px;transform:scaleX(0.8808);transform-origin:0 0;color:#c8c8c8;font-weight:400;">Màu (C)</div><div class="t" style="left:347.5px;top:21.91px;font-size:10.5px;transform:scaleX(0.8653);transform-origin:0 0;color:#c8c8c8;font-weight:400;">Xem(V)</div><div class="t" style="left:391.9px;top:21.91px;font-size:10.5px;transform:scaleX(0.8721);transform-origin:0 0;color:#c8c8c8;font-weight:400;">Công cụ(T)</div><div class="t" style="left:451.7px;top:21.91px;font-size:10.5px;transform:scaleX(0.8428);transform-origin:0 0;color:#c8c8c8;font-weight:400;">Cửa sổ(W)</div><div class="t" style="left:508.4px;top:21.91px;font-size:10.5px;transform:scaleX(0.9112);transform-origin:0 0;color:#c8c8c8;font-weight:400;">Cloud</div><div class="t" style="left:546.6px;top:21.91px;font-size:10.5px;transform:scaleX(0.9070);transform-origin:0 0;color:#c8c8c8;font-weight:400;">Help</div><div class="t" style="left:449.5px;top:43.53px;font-size:10px;transform:scaleX(0.8532);transform-origin:0 0;color:#d6d6d6;font-weight:400;">Khử răng cưa</div><div class="t" style="left:513.0px;top:43.53px;font-size:10px;transform:scaleX(0.8378);transform-origin:0 0;color:#d6d6d6;font-weight:400;">Điều chỉnh</div><div class="t" style="left:558.8px;top:43.53px;font-size:10px;transform:scaleX(0.8090);transform-origin:0 0;color:#d6d6d6;font-weight:400;">40</div><div class="t" style="left:656.5px;top:43.53px;font-size:10px;transform:scaleX(0.8056);transform-origin:0 0;color:#7c7c7c;font-weight:400;">Cạnh mềm</div><div class="t" style="left:708.6px;top:43.53px;font-size:10px;transform:scaleX(0.7368);transform-origin:0 0;color:#d6d6d6;font-weight:400;">Phím</div><div class="t" style="left:748.7px;top:43.44px;font-size:10px;transform:scaleX(0.8428);transform-origin:0 0;color:#dedede;font-weight:400;">Đặt lại</div><div class="t" style="left:802.5px;top:43.44px;font-size:10px;transform:scaleX(0.8621);transform-origin:0 0;color:#dedede;font-weight:400;">Tạo một đường thẳng</div><div class="t" style="left:77.5px;top:65.33px;font-size:10px;transform:scaleX(0.8688);transform-origin:0 0;color:#cfcfcf;font-weight:400;">Màu</div><div class="t" style="left:34.4px;top:137.86px;font-size:9.5px;transform:scaleX(0.8448);transform-origin:0 0;color:#cfcfcf;font-weight:400;">R:0</div><div class="t" style="left:34.4px;top:146.66px;font-size:9.5px;transform:scaleX(0.8163);transform-origin:0 0;color:#cfcfcf;font-weight:400;">G:0</div><div class="t" style="left:34.4px;top:155.46px;font-size:9.5px;transform:scaleX(0.8762);transform-origin:0 0;color:#cfcfcf;font-weight:400;">B:0</div><div class="t" style="left:34.4px;top:170.06px;font-size:9.5px;transform:scaleX(0.8003);transform-origin:0 0;color:#cfcfcf;font-weight:400;">#000000</div><div class="t" style="left:61.6px;top:228.94px;font-size:10px;transform:scaleX(0.8372);transform-origin:0 0;color:#cfcfcf;font-weight:400;">Kiểm soát cọ</div><div class="t" style="left:140.7px;top:252.44px;font-size:10px;transform:scaleX(1.0283);transform-origin:0 0;color:#c8c8c8;font-weight:400;">7.2</div><div class="t" style="left:131.6px;top:271.44px;font-size:10px;color:#d0d0d0;font-weight:400;">100 %</div><div class="t" style="left:66.5px;top:403.54px;font-size:10px;transform:scaleX(0.8293);transform-origin:0 0;color:#cfcfcf;font-weight:400;">Cọ: Pencil</div><div class="t" style="left:47.6px;top:420.71px;font-size:10.5px;transform:scaleX(1.0747);transform-origin:0 0;color:#e8607a;font-weight:400;">7.2</div><div class="t" style="left:72.8px;top:420.71px;font-size:10.5px;transform:scaleX(0.9212);transform-origin:0 0;color:#ffffff;font-weight:700;">Pencil</div><div class="t" style="left:47.6px;top:436.71px;font-size:10.5px;transform:scaleX(0.9198);transform-origin:0 0;color:#dcdcdc;font-weight:400;">10</div><div class="t" style="left:72.8px;top:436.71px;font-size:10.5px;transform:scaleX(0.9097);transform-origin:0 0;color:#dcdcdc;font-weight:400;">Pen</div><div class="t" style="left:47.6px;top:452.71px;font-size:10.5px;transform:scaleX(0.9198);transform-origin:0 0;color:#dcdcdc;font-weight:400;">15</div><div class="t" style="left:72.8px;top:452.71px;font-size:10.5px;transform:scaleX(0.8730);transform-origin:0 0;color:#dcdcdc;font-weight:400;">G Pen</div><div class="t" style="left:47.6px;top:468.71px;font-size:10.5px;transform:scaleX(0.9198);transform-origin:0 0;color:#dcdcdc;font-weight:400;">15</div><div class="t" style="left:72.8px;top:468.71px;font-size:10.5px;transform:scaleX(0.9008);transform-origin:0 0;color:#dcdcdc;font-weight:400;">Mapping Pen</div><div class="t" style="left:47.6px;top:484.71px;font-size:10.5px;transform:scaleX(0.9198);transform-origin:0 0;color:#dcdcdc;font-weight:400;">10</div><div class="t" style="left:72.8px;top:484.71px;font-size:10.5px;transform:scaleX(0.9214);transform-origin:0 0;color:#dcdcdc;font-weight:400;">Edge Pen</div><div class="t" style="left:47.6px;top:500.71px;font-size:10.5px;transform:scaleX(0.9198);transform-origin:0 0;color:#dcdcdc;font-weight:400;">50</div><div class="t" style="left:72.8px;top:500.71px;font-size:10.5px;transform:scaleX(0.9308);transform-origin:0 0;color:#dcdcdc;font-weight:400;">Stipple Pen</div><div class="t" style="left:325.5px;top:64.43px;font-size:10px;transform:scaleX(0.8641);transform-origin:0 0;color:#c4c4c4;font-weight:400;">Untitled</div><div class="t" style="left:909.0px;top:66.13px;font-size:10px;transform:scaleX(0.8591);transform-origin:0 0;color:#cfcfcf;font-weight:400;">Hoa tiêu</div><div class="t" style="left:918.7px;top:135.13px;font-size:10px;transform:scaleX(0.7802);transform-origin:0 0;color:#cfcfcf;font-weight:400;">Lớp</div><div class="t" style="left:855.8px;top:153.94px;font-size:10px;transform:scaleX(0.8916);transform-origin:0 0;color:#d0d0d0;font-weight:400;">Độ trong</div><div class="t" style="left:993.7px;top:153.94px;font-size:10px;transform:scaleX(0.8710);transform-origin:0 0;color:#d0d0d0;font-weight:400;">100 %</div><div class="t" style="left:855.8px;top:173.94px;font-size:10px;transform:scaleX(0.8463);transform-origin:0 0;color:#d0d0d0;font-weight:400;">Pha trộn</div><div class="t" style="left:902.5px;top:173.94px;font-size:10px;transform:scaleX(0.8292);transform-origin:0 0;color:#c8c8c8;font-weight:400;">Bình thường</div><div class="t" style="left:871.4px;top:194.73px;font-size:10px;transform:scaleX(0.8495);transform-origin:0 0;color:#d0d0d0;font-weight:400;">Bảo vệ alpha</div><div class="t" style="left:944.0px;top:194.73px;font-size:10px;transform:scaleX(0.8458);transform-origin:0 0;color:#d0d0d0;font-weight:400;">Xén bớt</div><div class="t" style="left:997.0px;top:194.73px;font-size:10px;transform:scaleX(0.8134);transform-origin:0 0;color:#d0d0d0;font-weight:400;">Khóa</div><div class="t" style="left:921.9px;top:221.51px;font-size:10.5px;transform:scaleX(0.9181);transform-origin:0 0;color:#ffffff;font-weight:700;">Lớp5</div><div class="t" style="left:929.7px;top:252.51px;font-size:10.5px;transform:scaleX(0.8604);transform-origin:0 0;color:#e4e4e4;font-weight:400;">Lớp4</div><div class="t" style="left:921.9px;top:284.51px;font-size:10.5px;transform:scaleX(0.8604);transform-origin:0 0;color:#e4e4e4;font-weight:400;">Lớp1</div><div class="t" style="left:929.7px;top:316.51px;font-size:10.5px;transform:scaleX(0.8604);transform-origin:0 0;color:#e4e4e4;font-weight:400;">Lớp3</div><div class="t" style="left:921.9px;top:348.51px;font-size:10.5px;transform:scaleX(0.8604);transform-origin:0 0;color:#e4e4e4;font-weight:400;">Lớp1</div><div class="t" style="left:855.4px;top:475.44px;font-size:10px;transform:scaleX(0.8478);transform-origin:0 0;color:#d0d0d0;font-weight:400;">Brush Size</div><div class="t" style="left:903.6px;top:477.14px;font-size:10px;transform:scaleX(0.7463);transform-origin:0 0;color:#d0d0d0;font-weight:400;">Lớp</div><div class="t" style="left:904.5px;top:498.64px;font-size:10px;transform:scaleX(0.8886);transform-origin:0 0;color:#cfcfcf;font-weight:400;">Reference</div><div class="t" style="left:5.0px;top:539.63px;font-size:10px;transform:scaleX(0.8940);transform-origin:0 0;color:#cccccc;font-weight:400;">5700 * 4000 pixel</div><div class="t" style="left:81.8px;top:539.63px;font-size:10px;transform:scaleX(0.9012);transform-origin:0 0;color:#cccccc;font-weight:400;">(41.4 * 29cm)</div><div class="t" style="left:144.2px;top:539.63px;font-size:10px;transform:scaleX(0.9295);transform-origin:0 0;color:#cccccc;font-weight:400;">350 dpi</div><div class="t" style="left:182.3px;top:539.63px;font-size:10px;transform:scaleX(0.8598);transform-origin:0 0;color:#cccccc;font-weight:400;">13 %</div><div class="t" style="left:209.0px;top:539.63px;font-size:10px;transform:scaleX(0.8833);transform-origin:0 0;color:#cccccc;font-weight:400;">( 5838, 2997 )</div><div class="t" style="left:270.3px;top:539.63px;font-size:10px;transform:scaleX(0.9499);transform-origin:0 0;color:#cccccc;font-weight:400;">Vẽ một đường thẳng bằng cách giữ phím Shift, Thay đổi cỡ cọ bằng cách giữ phím Ctrl, Alt và kéo</div><div class="t" style="left:720.0px;top:559.31px;font-size:10.5px;transform:scaleX(0.9418);transform-origin:0 0;color:#1a1a1a;font-weight:400;">84°F</div><div class="t" style="left:748.7px;top:559.31px;font-size:10.5px;transform:scaleX(1.0412);transform-origin:0 0;color:#1a1a1a;font-weight:400;">Mostly su...</div><div class="t" style="left:909.0px;top:559.74px;font-size:10px;transform:scaleX(0.8490);transform-origin:0 0;color:#1a1a1a;font-weight:400;">ENG</div><div class="t" style="left:939.5px;top:559.74px;font-size:10px;transform:scaleX(0.9208);transform-origin:0 0;color:#1a1a1a;font-weight:400;">3:49 PM</div>
</body></html>
